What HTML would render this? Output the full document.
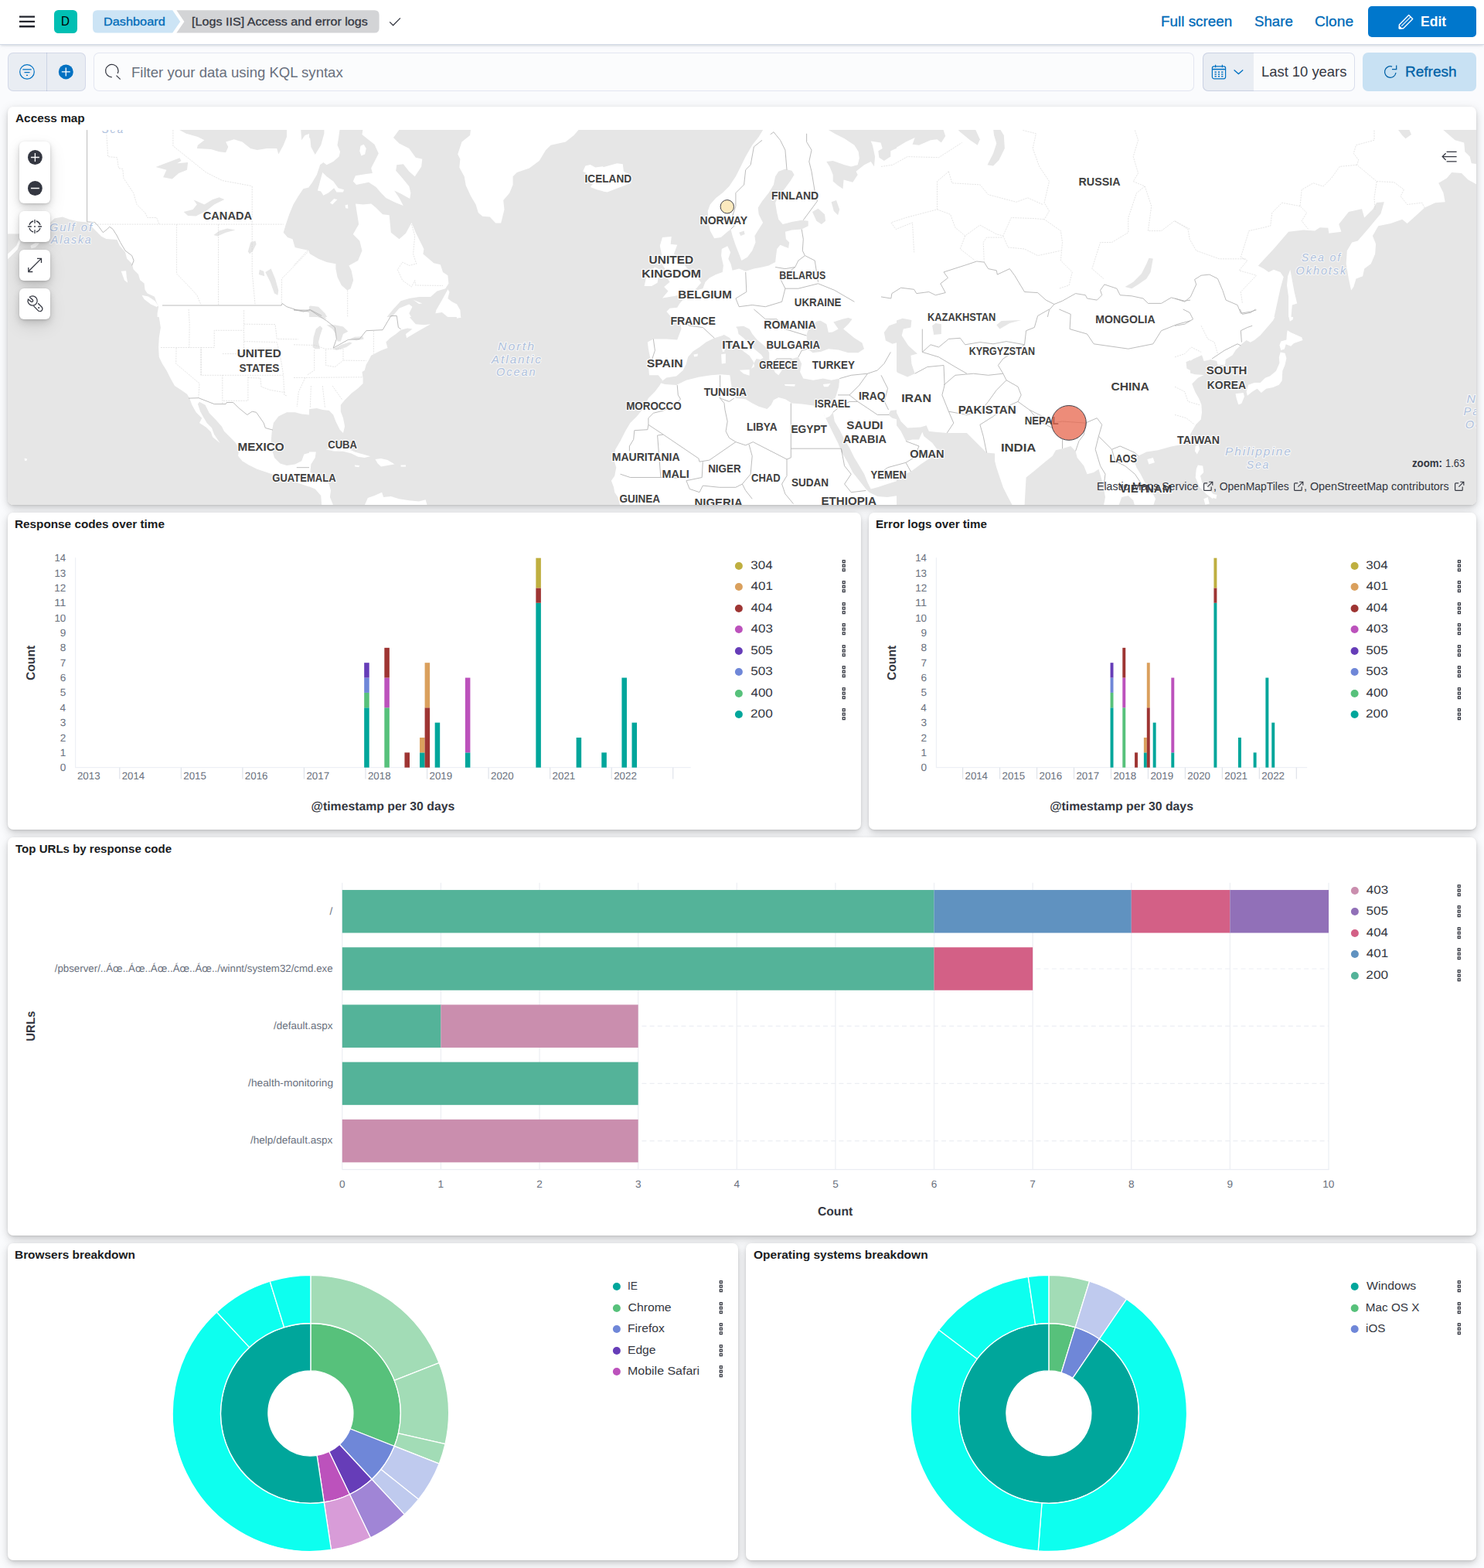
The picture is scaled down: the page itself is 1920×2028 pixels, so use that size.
<!DOCTYPE html>
<html lang="en"><head><meta charset="utf-8"><title>[Logs IIS] Access and error logs - Elastic</title>
<style>
html,body{margin:0;padding:0}
body{width:1920px;height:2028px;position:relative;overflow:hidden;background:#fafbfd;font-family:"Liberation Sans",sans-serif;color:#343741}
.a{position:absolute;display:block}
.t{position:absolute;white-space:nowrap;line-height:1;transform-origin:0 0}
.hdr{position:absolute;left:0;top:0;width:1920px;height:56.6px;background:#fff;border-bottom:1px solid #d3dae6;box-shadow:0 2.4px 2.4px -1px rgba(152,162,179,.3),0 1.2px 6px -2px rgba(152,162,179,.3)}
.p{position:absolute;background:#fff;border-radius:7px;box-shadow:0 1px 2px rgba(0,0,0,.08),0 2.5px 5px rgba(0,0,0,.06),0 5.5px 12px rgba(0,0,0,.06),0 3px 14px rgba(0,0,0,.115)}
svg text{font-family:"Liberation Sans",sans-serif}
</style></head>
<body>
<!-- head -->
<div class="hdr"></div>
<svg class="a" style="left:24px;top:18px" width="22" height="20" viewBox="0 0 22 20"><path d="M1 3.6h20M1 9.9h20M1 16.2h20" stroke="#22242c" stroke-width="2.4" fill="none"/></svg>
<div class="a" style="left:70px;top:13.4px;width:29.6px;height:29.4px;border-radius:5.5px;background:#00bfb3"></div>
<div class="t" style="left:79.15px;top:19px;line-height:17px;font-size:15.8px;color:#000;transform:scaleX(0.9617);">D</div>
<svg class="a" style="left:119px;top:12px" width="410" height="32" viewBox="119 12 410 32"><path d="M126 13.3H223.2L233.2 27.9L223.2 42.5H126Q120 42.5 120 36.5V19.3Q120 13.3 126 13.3Z" fill="#cce4f5"/><path d="M228.4 13.3H484.6Q490.6 13.3 490.6 19.3V36.5Q490.6 42.5 484.6 42.5H228.4L238.4 27.9Z" fill="#d3d4d6"/><path d="M504.2 28.4L508.6 32.8L517.9 23.4" stroke="#343741" stroke-width="1.25" fill="none"/></svg>
<div class="t" style="left:133.86px;top:19px;line-height:17px;font-size:15.2px;color:#006bb8;transform:scaleX(1.0730);-webkit-text-stroke:0.28px #006bb8;">Dashboard</div>
<div class="t" style="left:248.25px;top:19px;line-height:17px;font-size:15.2px;color:#343741;transform:scaleX(1.0626);-webkit-text-stroke:0.28px #343741;">[Logs IIS] Access and error logs</div>
<div class="t" style="left:1501.95px;top:18px;line-height:20px;font-size:17.75px;color:#006bb8;transform:scaleX(1.0629);-webkit-text-stroke:0.28px #006bb8;">Full screen</div>
<div class="t" style="left:1622.65px;top:18px;line-height:20px;font-size:17.75px;color:#006bb8;transform:scaleX(1.0508);-webkit-text-stroke:0.28px #006bb8;">Share</div>
<div class="t" style="left:1700.93px;top:18px;line-height:20px;font-size:17.75px;color:#006bb8;transform:scaleX(1.0808);-webkit-text-stroke:0.28px #006bb8;">Clone</div>
<div class="a" style="left:1770px;top:8.2px;width:140px;height:39.6px;border-radius:5px;background:#0077cc"></div>
<svg class="a" style="left:1809px;top:18px" width="20" height="20" viewBox="0 0 20 20" fill="none" stroke="#fff" stroke-width="1.4" stroke-linejoin="round" stroke-linecap="round"><path d="M13.7 1.5L18.7 6.6L6.5 18.7L1.2 18.8L1.4 13.9Z"/><path d="M4.6 15.4L15.6 4.4" stroke-width="1.15"/><path d="M1.3 18.7L1.4 15.4L4.6 18.6Z" fill="#fff" stroke-width="1"/></svg>
<div class="t" style="left:1838.13px;top:18px;line-height:20px;font-size:17.75px;color:#fff;font-weight:700;transform:scaleX(0.9869);">Edit</div>
<div class="a" style="left:10px;top:68px;width:101px;height:49.6px;border-radius:7px;background:#e9edf3;box-shadow:inset 0 0 0 1px rgba(17,43,134,.1)"></div>
<div class="a" style="left:60.2px;top:68px;width:1px;height:49.6px;background:rgba(17,43,134,.13)"></div>
<svg class="a" style="left:24px;top:82px" width="22" height="22" viewBox="0 0 22 22" fill="none" stroke="#0071c2" stroke-width="1.2"><circle cx="11" cy="10.9" r="9.3"/><path d="M5.3 7.9h11.4M7.5 11.6h7M10 15.4h2" stroke-width="1.3"/></svg>
<svg class="a" style="left:74px;top:82px" width="22" height="22" viewBox="0 0 22 22"><circle cx="11.3" cy="10.9" r="9.5" fill="#0071c2"/><path d="M11.3 5.4v11M5.8 10.9h11" stroke="#fff" stroke-width="1.3"/></svg>
<div class="a" style="left:121px;top:68px;width:1424.4px;height:49.6px;border-radius:7px;background:#fbfcfd;box-shadow:inset 0 0 0 1px rgba(17,43,134,.1)"></div>
<svg class="a" style="left:134px;top:81px" width="24" height="24" viewBox="0 0 24 24" fill="none" stroke="#343741" stroke-width="1.25"><path d="M10.8 18.8A8.2 8.2 0 1 1 18.23 14.07"/><path d="M16.5 16.6L21.7 21.6"/></svg>
<div class="t" style="left:170.08px;top:84px;line-height:20px;font-size:17.75px;color:#69707d;transform:scaleX(1.0456);">Filter your data using KQL syntax</div>
<div class="a" style="left:1556px;top:68px;width:197px;height:49.6px;border-radius:7px;background:#fbfcfd;overflow:hidden"><div style="position:absolute;left:0;top:0;width:66px;height:50px;background:#e9edf3"></div></div><div class="a" style="left:1556px;top:68px;width:197px;height:49.6px;border-radius:7px;box-shadow:inset 0 0 0 1px rgba(17,43,134,.14)"></div>
<svg class="a" style="left:1567px;top:82px" width="44" height="22" viewBox="0 0 44 22" fill="none" stroke="#0071c2" stroke-width="1.2"><rect x="1.4" y="3.8" width="17.2" height="16" rx="2.2"/><path d="M1.4 7.6h17.2" stroke-width="1.6"/><path d="M5.6 1.8v3.4M14.4 1.8v3.4"/><path d="M4.6 11.2h2.2M8.9 11.2h2.2M13.2 11.2h2.2M4.6 14h2.2M8.9 14h2.2M13.2 14h2.2M4.6 16.8h2.2M8.9 16.8h2.2M13.2 16.8h2.2" stroke-width="1.5"/><path d="M29.6 8.4L35.4 13.6L41.2 8.4" stroke-width="1.3"/></svg>
<div class="t" style="left:1632.09px;top:83px;line-height:20px;font-size:17.75px;color:#343741;transform:scaleX(1.0358);">Last 10 years</div>
<div class="a" style="left:1763px;top:68px;width:147px;height:49.6px;border-radius:7px;background:#c8e1f3"></div>
<svg class="a" style="left:1788px;top:82px" width="22" height="22" viewBox="0 0 22 22" fill="none" stroke="#0061a6" stroke-width="1.25"><path d="M13.04 4.1A7.25 7.25 0 1 0 17.98 12"/><path d="M13 7.6H18.7V2.4"/></svg>
<div class="t" style="left:1818.04px;top:83px;line-height:20px;font-size:17.75px;color:#0061a6;transform:scaleX(1.0715);-webkit-text-stroke:0.28px #0061a6;">Refresh</div>
<!-- panels -->
<div class="p" style="left:10px;top:138px;width:1900px;height:514.8px"></div>
<div class="t" style="left:19.92px;top:144px;line-height:17px;font-size:15.2px;color:#1a1c21;font-weight:700;transform:scaleX(1.0123);">Access map</div>
<div class="p" style="left:10px;top:662.8px;width:1104px;height:410.2px"></div>
<div class="t" style="left:19.28px;top:669px;line-height:17px;font-size:15.2px;color:#1a1c21;font-weight:700;transform:scaleX(1.0075);">Response codes over time</div>
<div class="p" style="left:1124px;top:662.8px;width:786px;height:410.2px"></div>
<div class="t" style="left:1133.29px;top:669px;line-height:17px;font-size:15.2px;color:#1a1c21;font-weight:700;transform:scaleX(0.9971);">Error logs over time</div>
<div class="p" style="left:10px;top:1083px;width:1900px;height:515px"></div>
<div class="t" style="left:20.13px;top:1089px;line-height:17px;font-size:15.2px;color:#1a1c21;font-weight:700;transform:scaleX(0.9910);">Top URLs by response code</div>
<div class="p" style="left:10px;top:1608px;width:945px;height:410px"></div>
<div class="t" style="left:19.27px;top:1614px;line-height:17px;font-size:15.2px;color:#1a1c21;font-weight:700;transform:scaleX(1.0146);">Browsers breakdown</div>
<div class="p" style="left:965px;top:1608px;width:945px;height:410px"></div>
<div class="t" style="left:974.66px;top:1614px;line-height:17px;font-size:15.2px;color:#1a1c21;font-weight:700;transform:scaleX(1.0202);">Operating systems breakdown</div>
<!-- map -->
<div class="a" style="left:10px;top:168px;width:1900px;height:484.8px;overflow:hidden;border-radius:0 0 7px 7px;background:#e6e6e6">
<svg class="a" style="left:0;top:0" width="1900" height="485" viewBox="10 168 1900 485">
<clipPath id="ca1"><rect x="10" y="168" width="390" height="242"/></clipPath>
<g clip-path="url(#ca1)">
<rect x="9.5" y="167.5" width="391" height="243" fill="#ffffff"/>
<path d="M10.0 302.4L23.5 302.4L42.6 298.6L65.0 287.9L70.4 282.6L81.0 280.5L89.6 283.7L100.2 286.2L113.0 287.5L119.4 294.1L131.1 305.8L137.5 309.0L151.4 310.1L154.6 317.6L162.0 326.1L164.2 334.6L170.6 341.0L172.7 348.5L179.1 354.9L181.2 362.3L186.6 366.6L187.6 375.1L190.8 379.4L200.0 383.7L202.6 391.3L205.1 396.7L203.6 405.2L203.6 411.6L10.0 411.6Z" fill="#e6e6e6" />
<path d="M10.0 328.4L21.3 317.8L24.9 309.3L26.7 312.5L22.4 323.1L10.0 335.3Z" fill="#ffffff" />
<path d="M39.4 317.8L45.8 313.9L51.2 314.6L45.8 319.9L40.5 321.6Z" fill="#ffffff" />
<path d="M156.7 350.8L163.1 350.2L163.8 358.3L165.2 365.8L161.0 362.6Z" fill="#ffffff" />
<path d="M183.4 381.7L191.9 383.5L200.4 389.2L204.7 395.6L202.6 397.1L195.1 393.5L186.6 387.1Z" fill="#ffffff" />
<path d="M229.2 166.4L240.9 172.8L255.9 177.1L264.4 181.3L255.9 187.7L254.8 192.0L272.9 193.0L283.6 196.2L292.1 197.3L295.3 189.9L292.1 183.5L302.8 180.3L313.4 183.5L324.1 192.0L332.6 194.1L345.4 192.0L358.2 192.0L360.3 199.4L366.7 187.7L371.0 177.1L371.0 166.4Z" fill="#e6e6e6" />
<path d="M389.1 166.4L390.2 181.3L394.5 174.9L400.9 172.8L400.9 166.4Z" fill="#e6e6e6" />
<path d="M201.5 215.9L232.4 204.3L234.5 208.0L229.2 211.2L243.1 210.1L242.0 219.7L231.3 224.0L222.8 231.4L211.1 229.3L215.4 219.7Z" fill="#e6e6e6" />
<path d="M237.7 274.1L249.5 270.9L254.8 264.5L250.5 258.5L264.4 264.5L275.1 258.1L283.6 255.3L290.4 258.1L277.2 264.5L266.5 273.0L253.7 279.4L243.1 279.0Z" fill="#e6e6e6" />
<path d="M276.5 303.9L283.6 298.6L294.2 295.4L304.5 297.5L292.1 300.7L281.4 305.4Z" fill="#e6e6e6" />
<path d="M320.9 325.2L324.1 313.5L330.5 311.4L331.6 315.7L327.3 324.2L323.0 328.4Z" fill="#e6e6e6" />
<path d="M335.8 348.7L341.2 350.8L342.2 357.2L334.8 355.1Z" fill="#e6e6e6" />
<path d="M343.3 351.9L350.7 347.6L356.1 360.4L360.3 375.4L359.3 381.7L355.0 379.6L349.7 364.7Z" fill="#e6e6e6" />
<path d="M400.9 242.1L392.3 244.2L385.9 253.8L379.5 264.5L374.2 277.3L369.9 290.1L366.7 300.7L372.1 307.1L378.5 309.3L381.7 319.9L390.2 322.0L400.9 324.2Z" fill="#e6e6e6" />
</g>
<clipPath id="ca2"><rect x="10" y="410" width="390" height="243"/></clipPath>
<g clip-path="url(#ca2)">
<rect x="9.5" y="409.5" width="391" height="244" fill="#e6e6e6"/>
<path d="M203.6 397.9L205.8 410.7L207.9 423.5L205.8 436.2L205.1 449.0L205.8 461.8L210.0 470.4L215.4 478.9L220.7 489.6L226.0 499.1L234.5 504.5L242.0 509.8L245.2 515.1L248.4 523.7L253.7 533.3L261.2 540.7L258.0 547.1L266.5 552.5L272.9 558.8L275.1 565.2L284.6 573.1L277.2 562.0L274.0 553.5L267.6 547.1L263.3 539.7L259.1 532.2L255.9 522.6L258.0 519.8L265.5 523.7L270.8 534.3L279.3 542.9L286.8 551.4L290.0 557.8L298.5 566.3L304.9 572.7L309.2 581.2L308.1 589.8L313.4 596.2L322.0 601.5L332.6 606.8L345.4 611.1L358.2 615.4L371.0 619.6L383.8 623.9L392.3 627.1L400.9 629.9L400.9 397.9Z" fill="#ffffff" />
<path d="M400.9 536.5L390.2 535.4L381.7 533.3L371.0 533.3L360.3 538.6L353.9 547.1L351.8 557.8L350.7 570.6L351.8 581.2L355.0 591.9L362.5 599.4L371.0 602.1L381.7 600.4L390.2 596.2L393.4 587.6L400.9 585.5Z" fill="#e6e6e6" />
<path d="M31.6 592.5L35.2 593.6L34.1 596.2L32.0 595.7Z" fill="#ffffff" />
</g>
<clipPath id="cb1"><rect x="400" y="168" width="380" height="242"/></clipPath>
<g clip-path="url(#cb1)">
<rect x="399.5" y="167.5" width="381" height="243" fill="#e6e6e6"/>
<path d="M358.7 166.4L389.0 166.4L389.0 181.3L396.0 172.8L401.3 179.2L402.4 189.9L407.7 200.1L415.2 187.7L419.4 172.8L419.4 166.4L439.7 166.4L437.6 181.3L436.5 187.7L440.1 196.2L438.6 202.6L431.2 209.0L422.6 213.3L418.4 210.1L414.1 213.3L409.9 226.1L403.5 236.8L400.3 241.0L390.7 243.2L388.1 247.4L388.1 254.9L358.7 258.1Z" fill="#ffffff" />
<path d="M417.3 222.9L422.6 228.2L431.2 234.6L437.6 243.2L445.0 245.3L444.0 248.5L435.4 248.5L432.2 243.2L424.8 249.6L418.4 252.8L415.2 247.4L410.9 246.4L414.1 234.6Z" fill="#ffffff" />
<path d="M426.9 262.3L432.2 257.0L436.5 258.1L430.1 264.5Z" fill="#ffffff" />
<path d="M446.5 265.5L449.9 264.5L450.4 269.8L447.2 269.2Z" fill="#ffffff" />
<path d="M466.4 188.8L470.6 186.7L473.8 192.0L472.1 199.4L467.4 201.6L465.3 195.2Z" fill="#ffffff" />
<path d="M469.6 166.4L468.5 173.9L474.9 179.2L484.5 186.7L489.8 198.4L484.5 209.0L480.2 217.6L481.9 224.0L473.8 225.0L460.0 227.2L456.8 234.6L461.0 238.9L477.0 235.7L486.6 242.1L493.0 249.6L499.4 255.9L512.2 262.3L521.8 266.0L516.5 255.9L510.1 246.4L518.6 250.6L530.3 257.0L531.4 249.6L529.3 241.0L520.7 230.4L512.2 220.8L513.3 213.3L521.8 212.2L529.3 221.8L536.7 228.2L545.2 215.4L546.3 205.8L537.8 203.7L529.3 192.0L516.5 185.6L509.0 178.1L517.5 166.4Z" fill="#ffffff" />
<path d="M358.7 321.0L386.4 319.9L397.1 323.1L401.3 328.4L412.0 334.8L422.6 339.1L434.4 341.2L434.4 347.6L436.5 358.3L441.8 369.0L449.3 375.4L453.6 373.2L457.2 362.6L454.6 349.8L451.4 343.4L463.2 337.0L468.5 324.2L465.3 311.4L456.8 302.9L464.2 290.1L462.1 277.3L460.0 263.4L469.6 264.5L480.2 263.4L486.6 268.7L495.1 277.3L503.7 278.3L505.8 300.7L516.5 309.3L525.0 301.8L532.5 287.9L537.8 300.7L544.2 313.5L548.4 322.0L547.4 328.4L554.8 334.8L561.2 340.2L569.8 342.3L573.0 351.9L579.4 356.2L580.4 366.8L576.2 373.2L565.5 376.4L557.0 383.9L542.0 383.9L529.3 386.0L518.6 389.2L507.9 400.9L498.3 412.7L358.7 412.7Z" fill="#ffffff" />
<path d="M579.4 374.3L571.9 388.1L564.4 400.9L563.4 405.2L571.9 404.1L582.6 412.7L596.4 412.7L595.4 400.9L591.1 393.5L584.7 390.3L579.4 386.0L581.5 377.5Z" fill="#ffffff" />
<path d="M534.6 387.7L546.3 392.4L542.0 393.0Z" fill="#ffffff" />
<path d="M504.7 412.7L516.5 398.8L529.3 393.5L533.5 396.7L529.3 405.2L533.5 412.7Z" fill="#ffffff" />
<path d="M386.4 412.7L392.8 400.9L401.3 395.6L412.0 396.7L420.5 405.2L424.8 412.7Z" fill="#e6e6e6" />
<path d="M609.2 166.4L608.1 174.9L597.5 183.5L592.2 199.4L595.4 205.8L594.3 216.5L600.7 228.2L602.8 240.0L609.2 253.8L615.6 264.5L618.8 275.1L624.1 279.8L633.7 280.5L641.2 288.6L648.2 288.6L652.5 270.9L651.2 259.1L659.3 249.6L663.6 238.9L663.6 228.2L668.9 222.9L684.9 217.6L697.7 208.0L706.2 194.1L712.6 187.7L731.8 183.5L742.5 174.9L749.9 166.4Z" fill="#ffffff" />
<path d="M754.2 221.8L757.4 214.4L763.8 212.9L770.2 216.5L780.9 215.0L780.9 247.4L772.3 245.3L763.8 242.1L767.0 237.8L758.5 224.0Z" fill="#ffffff" />
</g>
<clipPath id="cb2"><rect x="400" y="410" width="380" height="243"/></clipPath>
<g clip-path="url(#cb2)">
<rect x="399.5" y="409.5" width="381" height="244" fill="#e6e6e6"/>
<path d="M377.9 397.9L497.3 397.9L498.3 408.5L507.9 404.3L514.3 397.9L529.3 397.9L530.3 410.7L537.8 419.2L548.4 420.3L557.0 419.2L542.0 427.7L529.3 435.2L526.1 437.3L525.0 432.0L533.5 425.6L527.1 424.5L518.6 426.7L512.2 432.0L504.7 437.3L499.4 442.6L501.5 450.1L493.0 453.3L486.6 456.5L480.2 459.7L477.0 466.1L473.8 471.4L471.7 478.9L468.5 481.0L469.6 489.6L469.6 495.9L463.2 502.3L454.6 508.7L446.1 517.3L440.8 523.7L440.8 532.2L444.0 540.7L446.1 551.4L444.0 559.9L439.7 555.7L434.4 545.0L431.2 536.5L425.8 531.1L417.3 530.1L409.9 527.9L401.3 529.0L394.9 530.1L394.9 535.4L386.4 534.3L380.0 532.2L377.9 532.2Z" fill="#ffffff" />
<path d="M563.4 397.9L565.5 403.2L580.4 408.5L590.0 406.4L591.1 411.7L596.4 410.7L597.5 397.9Z" fill="#ffffff" />
<path d="M377.9 413.9L386.4 406.4L392.8 403.2L401.3 398.9L414.1 401.1L422.6 412.8L416.2 411.7L405.6 408.5L397.1 410.7L390.7 413.9Z" fill="#e6e6e6" />
<path d="M404.5 449.0L405.6 436.2L408.8 425.6L414.1 421.3L417.3 424.5L414.1 434.1L412.0 442.6L414.1 451.2L407.7 451.2Z" fill="#e6e6e6" />
<path d="M422.6 420.3L433.3 420.3L444.0 422.4L450.4 428.8L444.0 432.0L440.8 441.6L436.5 441.6L434.4 432.0L430.1 425.6Z" fill="#e6e6e6" />
<path d="M431.2 451.2L441.8 445.8L452.5 442.6L455.7 443.7L448.2 449.0L435.4 452.9Z" fill="#e6e6e6" />
<path d="M452.5 438.4L458.9 435.8L469.6 435.2L470.6 438.4L461.0 440.5Z" fill="#e6e6e6" />
<path d="M421.6 581.2L435.4 578.0L450.4 580.2L458.9 584.4L469.6 587.6L479.1 590.2L471.7 591.9L463.2 590.8L454.6 586.6L444.0 583.8L431.2 583.4Z" fill="#ffffff" />
<path d="M485.5 594.0L493.0 593.0L501.5 595.1L510.5 600.4L501.5 602.1L493.0 603.6L488.7 599.4Z" fill="#ffffff" />
<path d="M458.9 601.5L465.3 602.1L464.2 604.3L459.3 603.6Z" fill="#ffffff" />
<path d="M518.6 601.5L525.0 601.5L525.0 603.6L518.6 603.6Z" fill="#ffffff" />
<path d="M377.9 587.6L390.7 586.6L399.2 584.4L408.8 584.4L407.7 591.9L402.4 600.4L401.3 611.1L414.1 615.4L425.8 626.0L428.0 634.5L426.9 643.1L431.2 653.7L416.2 653.7L415.2 640.9L407.7 632.4L397.1 628.1L380.0 621.7L377.9 621.7Z" fill="#ffffff" />
<path d="M471.7 653.7L475.9 644.1L484.5 640.9L494.1 636.7L496.2 643.1L505.8 642.0L516.5 645.2L529.3 647.3L542.0 648.4L550.6 646.3L552.7 653.7Z" fill="#ffffff" />
</g>
<clipPath id="cc1"><rect x="780" y="168" width="380" height="242"/></clipPath>
<g clip-path="url(#cc1)">
<rect x="779.5" y="167.5" width="381" height="243" fill="#e6e6e6"/>
<path d="M757.9 213.3L768.5 215.4L781.3 215.9L798.4 211.2L805.8 212.2L806.9 221.8L815.4 226.1L816.5 236.8L802.6 242.1L785.6 248.5L772.8 246.4L757.9 242.1Z" fill="#ffffff" />
<path d="M988.1 166.4L981.7 177.1L973.2 187.7L964.7 202.6L958.3 215.4L951.9 228.2L943.4 241.0L934.8 249.6L926.3 255.9L918.8 264.5L915.7 273.0L916.7 287.9L918.8 298.6L924.2 308.2L932.7 307.1L941.2 299.7L945.5 296.5L947.6 305.0L951.9 317.8L956.2 328.4L959.4 337.0L966.8 332.7L973.2 324.2L977.5 313.5L976.4 305.0L981.7 296.5L987.1 287.9L981.7 277.3L980.7 268.7L986.0 260.2L994.5 249.6L1000.9 238.9L1003.1 228.2L1007.3 221.8L1015.9 218.6L1024.4 220.8L1027.6 226.1L1022.3 234.6L1015.9 243.2L1007.3 253.8L1003.1 262.3L1005.2 275.1L1007.3 283.7L1012.7 290.1L1024.4 286.9L1037.2 284.7L1045.7 285.8L1045.7 292.2L1037.2 296.5L1024.4 297.5L1015.9 299.7L1016.9 309.3L1021.2 313.5L1020.1 321.0L1009.5 316.7L1005.2 322.0L1004.1 330.6L1003.1 339.1L994.5 343.4L986.0 345.5L975.4 347.6L964.7 350.8L956.2 347.6L947.6 349.8L945.5 341.2L942.3 334.8L945.1 326.3L941.2 318.2L933.8 322.0L933.1 330.6L935.9 343.4L934.8 351.9L926.3 355.1L917.8 359.4L912.5 364.7L909.3 373.2L900.7 375.4L892.2 377.5L879.4 392.4L876.2 397.7L866.6 398.8L862.3 403.1L870.9 412.7L1161.9 412.7L1161.9 166.4Z" fill="#ffffff" />
<path d="M857.0 307.1L868.7 306.1L867.7 315.7L876.2 316.7L871.9 328.4L881.5 337.0L887.9 345.5L894.3 354.0L902.9 359.4L907.1 365.8L900.7 373.2L896.5 377.5L879.4 381.7L857.0 385.6L864.5 376.4L859.1 371.1L866.6 364.7L861.3 357.2L860.2 347.6L854.9 339.1L855.9 328.4L853.8 317.8Z" fill="#ffffff" />
<path d="M833.6 370.0L835.7 360.4L840.0 351.9L847.4 345.5L853.8 348.7L851.7 358.3L850.6 365.8L843.2 370.0Z" fill="#ffffff" />
<path d="M1069.2 166.4L1079.8 172.8L1092.6 179.2L1105.4 187.7L1110.7 196.2L1111.8 204.8L1109.7 213.3L1101.2 215.4L1092.6 213.3L1077.7 208.0L1069.2 209.0L1073.4 215.4L1077.7 226.1L1077.7 234.6L1084.1 240.0L1090.5 244.2L1091.6 232.5L1103.3 235.7L1109.7 226.1L1107.5 221.8L1118.2 213.3L1126.7 209.0L1131.0 215.4L1132.1 202.6L1128.9 187.7L1126.7 182.4L1139.5 184.5L1141.7 192.0L1136.3 195.2L1137.4 203.7L1143.8 208.0L1152.3 202.6L1152.3 195.2L1161.9 190.9L1161.9 166.4Z" fill="#e6e6e6" />
<path d="M1051.0 274.1L1058.5 269.8L1067.0 277.3L1068.1 285.8L1062.8 290.1L1056.4 285.8Z" fill="#e6e6e6" />
<path d="M1075.6 261.3L1082.0 259.1L1086.2 270.9L1084.1 278.3L1078.8 273.0Z" fill="#e6e6e6" />
<path d="M956.2 300.7L962.6 298.6L963.6 302.9L958.3 305.0Z" fill="#e6e6e6" />
</g>
<clipPath id="cc2"><rect x="780" y="410" width="380" height="243"/></clipPath>
<g clip-path="url(#cc2)">
<rect x="779.5" y="409.5" width="381" height="244" fill="#ffffff"/>
<path d="M757.9 397.9L862.3 397.9L866.6 404.3L879.4 412.8L881.5 425.6L876.2 439.4L862.3 438.4L845.3 438.4L837.8 442.6L838.9 451.2L841.0 461.8L838.9 472.5L840.0 485.3L851.7 485.3L857.0 491.7L853.8 498.1L847.4 506.6L838.9 515.1L832.5 527.9L824.0 538.6L815.4 547.1L809.0 557.8L802.6 570.6L796.2 581.2L794.1 594.0L797.3 604.7L795.2 615.4L790.9 621.7L794.1 630.3L795.2 636.7L799.4 643.1L802.6 654.8L757.9 654.8Z" fill="#e6e6e6" />
<path d="M853.8 494.9L862.3 488.5L875.1 486.4L883.7 478.9L887.9 470.4L890.1 461.8L896.5 454.4L905.0 449.0L913.5 442.6L924.2 437.3L934.8 434.1L953.0 422.4L961.9 421.7L969.6 425.6L973.4 432.0L979.8 439.7L987.5 446.1L992.6 451.2L995.2 456.3L995.2 464.0L998.8 473.6L1003.1 482.1L1007.3 485.3L1011.6 478.9L1015.9 470.4L1024.4 464.0L1032.9 461.8L1037.2 470.4L1035.1 481.0L1039.3 489.6L1052.1 491.7L1064.9 489.6L1075.6 491.7L1086.2 489.6L1085.2 500.2L1082.0 510.9L1078.8 519.4L1075.6 525.8L1073.4 525.8L1064.9 522.6L1054.2 524.7L1037.2 522.6L1024.4 521.5L1015.9 516.2L1007.3 514.1L1000.9 517.3L997.7 523.7L992.4 529.0L981.7 525.8L973.2 521.5L964.7 516.2L951.9 515.1L947.6 506.6L945.5 493.8L944.4 485.3L932.7 484.2L919.9 485.3L905.0 487.4L887.9 491.7L875.1 498.1L860.2 497.0Z" fill="#e6e6e6" />
<path d="M935.1 432.0L944.0 437.1L951.7 447.3L959.4 452.5L969.6 460.1L974.7 467.8L976.0 474.2L972.2 476.8L974.3 471.4L978.6 464.0L983.9 465.0L987.5 462.7L984.9 458.8L977.3 452.5L961.9 437.1L955.5 432.0L954.2 425.6L951.9 422.4L934.8 429.9Z" fill="#ffffff" />
<path d="M956.8 478.7L969.6 478.0L969.6 485.7L961.9 483.2Z" fill="#ffffff" />
<path d="M933.1 458.2L938.9 457.6L938.9 469.7L933.8 470.4Z" fill="#ffffff" />
<path d="M934.4 448.0L937.4 447.3L937.4 454.4L934.8 455.0Z" fill="#ffffff" />
<path d="M1014.8 497.0L1028.7 497.0L1028.2 499.8L1015.9 499.1Z" fill="#ffffff" />
<path d="M1064.9 497.0L1074.5 495.9L1071.3 500.2L1066.0 500.2Z" fill="#ffffff" />
<path d="M897.5 458.6L902.9 457.6L902.4 460.8L898.2 461.4Z" fill="#ffffff" />
<path d="M1043.8 432.0L1045.1 428.1L1056.6 415.4L1061.7 414.7L1069.4 419.2L1071.9 430.1L1077.1 429.4L1084.7 425.6L1078.3 416.6L1089.9 412.8L1097.5 410.9L1102.6 412.8L1097.5 419.2L1091.1 425.6L1105.2 437.1L1115.4 443.5L1118.0 451.2L1110.3 456.3L1097.5 456.3L1084.7 452.5L1071.9 451.2L1061.7 455.0L1051.5 456.3L1045.1 451.2L1043.8 438.4Z" fill="#e6e6e6" />
<path d="M1064.9 532.2L1068.1 540.7L1073.4 538.6L1077.7 533.3L1079.8 545.0L1086.2 555.7L1092.6 568.4L1099.0 579.1L1105.4 591.9L1111.8 602.6L1118.2 613.2L1122.5 623.9L1126.7 632.4L1135.3 630.3L1148.1 626.0L1161.9 621.7L1161.9 640.9L1148.1 643.1L1135.3 642.0L1124.6 636.7L1120.3 632.4L1111.8 621.7L1103.3 611.1L1096.9 598.3L1089.4 585.5L1084.1 572.7L1077.7 559.9L1071.3 547.1L1067.0 538.6Z" fill="#e6e6e6" />
<path d="M1161.9 417.1L1150.2 421.3L1143.8 429.9L1145.9 440.5L1154.5 444.8L1161.9 442.6Z" fill="#e6e6e6" />
<path d="M1161.9 530.1L1152.3 531.1L1149.1 536.5L1154.5 540.7L1161.9 542.9Z" fill="#e6e6e6" />
</g>
<clipPath id="cd1"><rect x="1160" y="168" width="380" height="242"/></clipPath>
<g clip-path="url(#cd1)">
<rect x="1159.5" y="167.5" width="381" height="243" fill="#ffffff"/>
<path d="M1137.9 166.4L1220.0 166.4L1223.2 176.0L1217.8 184.5L1212.5 180.3L1204.0 181.3L1189.0 187.7L1180.5 186.7L1183.7 178.1L1172.0 183.5L1152.8 195.2L1150.7 205.8L1137.9 208.6Z" fill="#e6e6e6" />
<path d="M1238.1 166.4L1261.5 166.4L1267.9 180.3L1264.7 187.7L1255.1 181.3L1242.3 170.7Z" fill="#e6e6e6" />
<path d="M1285.0 166.4L1293.5 166.4L1298.8 174.9L1299.9 192.0L1292.5 206.9L1285.0 214.4L1277.5 213.3L1285.0 198.4L1289.3 185.6L1286.1 174.9Z" fill="#e6e6e6" />
<path d="M1455.6 371.1L1466.2 364.7L1476.9 354.0L1483.3 341.2L1486.5 333.8L1491.8 334.4L1488.6 351.9L1483.3 360.4L1472.6 367.9L1464.1 373.2Z" fill="#e6e6e6" />
</g>
<clipPath id="cd2"><rect x="1160" y="410" width="380" height="243"/></clipPath>
<g clip-path="url(#cd2)">
<rect x="1159.5" y="409.5" width="381" height="244" fill="#ffffff"/>
<path d="M1144.3 427.7L1152.8 417.1L1167.7 411.7L1179.4 413.9L1178.4 423.5L1168.8 425.6L1166.7 434.1L1175.2 446.9L1186.9 457.6L1178.4 459.7L1179.4 470.4L1183.7 483.2L1174.1 487.4L1161.3 482.1L1154.9 472.5L1158.1 464.0L1154.9 449.0L1148.5 440.5Z" fill="#e6e6e6" />
<path d="M1206.1 421.3L1210.4 418.1L1217.8 419.2L1217.8 432.0L1208.2 433.0Z" fill="#e6e6e6" />
<path d="M1289.3 420.3L1295.7 414.9L1321.2 413.9L1306.3 418.1L1293.5 425.6Z" fill="#e6e6e6" />
<path d="M1149.6 530.1L1159.2 532.2L1165.6 545.0L1174.1 553.5L1191.2 552.5L1198.6 550.3L1201.8 557.8L1210.4 558.8L1225.3 559.9L1250.9 559.9L1259.4 568.4L1267.9 577.0L1276.5 585.5L1287.1 586.6L1287.1 596.2L1289.3 604.7L1293.5 617.5L1297.8 630.3L1304.2 643.1L1310.6 654.8L1137.9 654.8L1137.9 632.4L1152.8 621.7L1165.6 615.4L1178.4 610.0L1191.2 600.4L1204.0 591.9L1212.5 581.2L1206.1 572.7L1195.4 564.2L1193.3 558.8L1189.0 568.4L1180.5 568.4L1172.0 570.6L1165.6 557.8L1159.2 549.3L1152.8 540.7Z" fill="#e6e6e6" />
<path d="M1325.5 654.8L1326.6 634.5L1327.6 617.5L1338.3 609.0L1351.1 598.3L1361.7 589.8L1366.0 582.3L1374.5 580.2L1385.2 577.0L1391.6 583.4L1393.7 591.9L1402.3 602.6L1406.5 613.2L1415.1 611.1L1421.4 606.8L1424.6 617.5L1427.8 630.3L1430.0 643.1L1427.8 654.8Z" fill="#e6e6e6" />
<path d="M1541.9 571.6L1530.2 574.8L1515.3 577.4L1498.2 582.3L1483.3 584.4L1472.6 589.8L1467.3 596.2L1470.5 604.7L1475.8 613.2L1481.2 623.9L1489.7 634.5L1495.0 645.2L1491.8 654.8L1541.9 654.8Z" fill="#e6e6e6" />
<path d="M1484.3 594.0L1491.8 591.9L1493.9 598.3L1486.5 600.4Z" fill="#ffffff" />
<path d="M1447.0 654.8L1451.3 643.1L1459.8 640.9L1466.2 647.3L1468.4 654.8Z" fill="#e6e6e6" />
<path d="M1534.5 468.2L1541.9 465.0L1541.9 480.0L1535.5 476.8Z" fill="#e6e6e6" />
</g>
<clipPath id="ce1"><rect x="1540" y="168" width="370" height="242"/></clipPath>
<g clip-path="url(#ce1)">
<rect x="1539.5" y="167.5" width="371" height="243" fill="#ffffff"/>
<path d="M1627.7 343.8L1647.9 322.0L1667.1 299.7L1686.3 297.5L1701.2 298.6L1707.6 294.3L1718.3 294.8L1719.4 301.8L1735.4 299.7L1732.2 290.1L1744.9 274.1L1762.0 270.2L1765.2 281.5L1775.9 270.9L1781.2 261.9L1790.8 261.3L1786.5 276.2L1771.6 294.3L1756.7 311.4L1749.2 313.5L1742.8 324.2L1741.7 341.2L1744.9 360.4L1748.1 375.4L1751.3 371.1L1754.5 360.4L1763.1 357.2L1765.2 347.6L1773.7 341.2L1779.1 328.4L1780.1 315.7L1775.9 305.0L1783.3 292.2L1799.3 289.0L1814.2 283.7L1820.6 289.0L1831.3 279.4L1843.0 268.7L1856.9 262.3L1869.7 261.3L1867.5 249.6L1861.2 236.8L1871.8 230.4L1878.2 222.9L1891.0 224.0L1899.5 232.5L1911.3 238.9L1911.3 412.7L1647.9 412.7L1656.5 373.2L1660.7 358.3L1656.5 351.9L1647.9 348.7L1641.5 351.9L1635.1 347.6Z" fill="#e6e6e6" />
<path d="M1666.1 357.2L1669.3 348.7L1671.8 362.6L1674.6 377.5L1678.2 392.4L1671.8 394.5L1670.3 412.7L1667.1 412.7L1667.1 383.9L1665.0 369.0Z" fill="#ffffff" />
<path d="M1807.8 166.4L1822.8 166.4L1826.0 173.9L1818.5 179.2L1814.2 174.9Z" fill="#e6e6e6" />
<path d="M1865.4 166.4L1882.5 181.3L1894.2 184.5L1895.3 196.2L1901.7 202.6L1903.8 211.2L1911.3 212.2L1911.3 166.4Z" fill="#e6e6e6" />
</g>
<clipPath id="ce2"><rect x="1540" y="410" width="370" height="243"/></clipPath>
<g clip-path="url(#ce2)">
<rect x="1539.5" y="409.5" width="371" height="244" fill="#e6e6e6"/>
<path d="M1530.0 400.0L1656.0 400.0L1655.4 392.8L1652.2 404.3L1647.1 414.5L1639.4 423.5L1630.5 433.7L1622.8 440.1L1617.7 442.7L1612.6 440.1L1606.2 445.2L1598.5 452.9L1594.7 459.3L1585.7 465.1L1585.1 472.1L1575.5 472.1L1574.2 467.0L1566.5 465.1L1557.6 467.0L1555.0 459.3L1543.5 464.4L1532.0 472.1L1533.3 477.2L1539.7 482.3L1546.1 484.3L1557.6 484.9L1549.9 488.7L1542.2 496.4L1546.1 506.6L1551.2 515.6L1554.4 523.3L1555.0 533.5L1553.7 542.5L1547.3 548.9L1542.2 557.8L1539.7 562.0L1535.0 570.0L1530.0 578.0Z" fill="#ffffff" />
<path d="M1665.7 427.3L1670.1 429.9L1684.2 436.3L1685.5 440.1L1674.0 444.0L1670.1 447.8L1663.7 445.2L1661.8 451.6L1657.3 452.9L1655.4 446.5L1657.3 441.4L1664.4 439.5L1665.0 431.2Z" fill="#ffffff" />
<path d="M1656.7 455.5L1662.5 456.8L1664.4 463.2L1662.5 472.1L1659.3 479.8L1658.6 492.6L1654.8 497.7L1647.1 500.9L1638.2 502.8L1631.8 507.9L1626.6 502.8L1620.3 506.6L1613.9 511.8L1612.6 506.6L1615.1 497.7L1622.8 495.1L1630.5 495.1L1636.9 488.7L1643.3 486.2L1651.0 479.8L1655.4 469.6L1654.8 461.9Z" fill="#ffffff" />
<path d="M1598.5 509.2L1608.7 507.9L1610.0 513.0L1606.2 522.0L1602.3 523.3L1599.8 515.6Z" fill="#ffffff" />
<path d="M1667.6 400.0L1674.0 400.0L1672.7 413.3L1668.9 415.8L1667.0 408.0Z" fill="#ffffff" />
<path d="M1546.7 577.0L1550.9 574.8L1552.0 581.2L1548.8 587.6L1546.0 583.4Z" fill="#ffffff" />
<path d="M1549.9 601.5L1556.2 602.6L1557.3 611.1L1553.0 615.4L1555.2 623.9L1562.6 630.3L1571.2 640.9L1569.0 645.2L1560.5 638.8L1552.0 630.3L1546.7 617.5L1547.7 606.8Z" fill="#ffffff" />
<path d="M1557.3 645.2L1562.6 643.1L1564.8 651.6L1559.4 652.7Z" fill="#ffffff" />
<path d="M1569.0 638.8L1574.4 639.9L1573.3 645.2L1570.1 644.1Z" fill="#ffffff" />
</g>
<g><path d="M112.6 168.1L112.6 286.9L122.6 287.5L127.9 293.3L133.3 300.7L138.6 296.5L141.8 293.3L146.1 296.5L151.4 305.0L155.7 313.5L162.0 324.2L170.6 330.6L173.1 337.0L170.6 343.4" fill="none" stroke="#b4b4b4" stroke-width="0.9" />
<path d="M210.0 395.0L364.2 395.0L365.0 392.4L371.0 396.7L383.8 400.9L400.0 403.1" fill="none" stroke="#b4b4b4" stroke-width="0.9" />
<path d="M122.6 290.1L366.7 290.1" fill="none" stroke="#d2d2d2" stroke-width="0.6" stroke-dasharray="2 1.2"/>
<path d="M228.6 290.1L228.6 354.0L243.1 369.0L254.8 381.7L260.1 394.5" fill="none" stroke="#d2d2d2" stroke-width="0.6" stroke-dasharray="2 1.2"/>
<path d="M282.5 290.1L282.5 394.5" fill="none" stroke="#d2d2d2" stroke-width="0.6" stroke-dasharray="2 1.2"/>
<path d="M326.2 241.0L326.2 290.1L326.2 351.9L330.1 394.5" fill="none" stroke="#d2d2d2" stroke-width="0.6" stroke-dasharray="2 1.2"/>
<path d="M137.5 168.1L139.7 202.6L151.4 203.7L153.5 217.6L158.8 218.6L159.9 230.4L172.7 249.6L177.0 264.5L187.6 275.1L190.8 281.5L202.6 281.5L205.8 289.6" fill="none" stroke="#d2d2d2" stroke-width="0.6" stroke-dasharray="2 1.2"/>
<path d="M223.9 168.1L223.9 188.8L266.5 222.9L287.8 233.6L326.2 240.6" fill="none" stroke="#d2d2d2" stroke-width="0.6" stroke-dasharray="2 1.2"/>
<path d="M400.0 324.2L364.6 360.4L364.2 394.5" fill="none" stroke="#d2d2d2" stroke-width="0.6" stroke-dasharray="2 1.2"/>
<path d="M244.1 515.1L256.9 514.7L277.2 522.6L292.1 522.6L293.2 520.5L301.7 520.5L309.2 527.9L319.8 536.5L326.2 532.2L331.6 533.3L341.2 547.1L343.3 553.5L352.9 556.1" fill="none" stroke="#b4b4b4" stroke-width="0.9" />
<path d="M383.8 604.7L400.0 604.7" fill="none" stroke="#b4b4b4" stroke-width="0.9" />
<path d="M207.9 449.5L260.1 449.5L260.1 485.3L287.8 485.3L287.8 522.6" fill="none" stroke="#d2d2d2" stroke-width="0.6" stroke-dasharray="2 1.2"/>
<path d="M244.1 400.0L245.2 419.2L244.8 449.5" fill="none" stroke="#d2d2d2" stroke-width="0.6" stroke-dasharray="2 1.2"/>
<path d="M228.1 450.1L227.7 470.4L258.0 495.9L256.9 514.1" fill="none" stroke="#d2d2d2" stroke-width="0.6" stroke-dasharray="2 1.2"/>
<path d="M260.1 485.3L260.1 449.5L277.2 449.5L277.2 427.3L315.6 427.3L315.6 400.0" fill="none" stroke="#d2d2d2" stroke-width="0.6" stroke-dasharray="2 1.2"/>
<path d="M287.8 485.3L366.7 485.3L367.8 510.9L371.0 511.9" fill="none" stroke="#d2d2d2" stroke-width="0.6" stroke-dasharray="2 1.2"/>
<path d="M287.8 457.6L315.6 457.6L315.6 427.3" fill="none" stroke="#d2d2d2" stroke-width="0.6" stroke-dasharray="2 1.2"/>
<path d="M315.6 441.6L358.2 442.6L362.5 459.7L366.7 485.3" fill="none" stroke="#d2d2d2" stroke-width="0.6" stroke-dasharray="2 1.2"/>
<path d="M315.6 419.2L356.1 419.6L358.2 438.4L385.9 438.8" fill="none" stroke="#d2d2d2" stroke-width="0.6" stroke-dasharray="2 1.2"/>
<path d="M320.9 487.4L320.9 518.3L288.9 518.3" fill="none" stroke="#d2d2d2" stroke-width="0.6" stroke-dasharray="2 1.2"/>
<path d="M320.9 488.5L336.9 489.1L338.0 500.2L349.7 504.5L368.9 507.7" fill="none" stroke="#d2d2d2" stroke-width="0.6" stroke-dasharray="2 1.2"/>
<path d="M398.1 323.8L380.0 343.4" fill="none" stroke="#d2d2d2" stroke-width="0.6" stroke-dasharray="2 1.2"/>
<path d="M449.7 375.4L449.7 409.9" fill="none" stroke="#d2d2d2" stroke-width="0.6" stroke-dasharray="2 1.2"/>
<path d="M532.5 290.1L536.7 305.0L534.6 328.4L538.8 341.2L529.3 343.4L520.7 339.1L514.3 348.7L520.7 362.6L532.5 371.1L536.7 362.6L537.8 369.0L573.0 369.4" fill="none" stroke="#d2d2d2" stroke-width="0.6" stroke-dasharray="2 1.2"/>
<path d="M380.0 400.5L392.8 403.1L401.3 400.5L416.2 408.4" fill="none" stroke="#b4b4b4" stroke-width="0.9" />
<path d="M380.0 401.1L401.3 401.1L422.6 414.9L433.3 423.5L435.4 438.4L431.2 450.1L450.4 439.4L465.3 438.4L473.8 427.7L495.1 426.7L505.8 408.5L513.3 408.5L515.4 423.5L518.6 425.6" fill="none" stroke="#b4b4b4" stroke-width="0.9" />
<path d="M380.0 445.8L407.7 446.5L420.5 451.2L444.0 451.2L444.0 466.1L473.8 466.5" fill="none" stroke="#d2d2d2" stroke-width="0.6" stroke-dasharray="2 1.2"/>
<path d="M380.0 488.5L469.6 487.8" fill="none" stroke="#d2d2d2" stroke-width="0.6" stroke-dasharray="2 1.2"/>
<path d="M394.9 488.5L386.4 506.6L384.3 525.8" fill="none" stroke="#d2d2d2" stroke-width="0.6" stroke-dasharray="2 1.2"/>
<path d="M402.4 499.1L401.3 527.9" fill="none" stroke="#d2d2d2" stroke-width="0.6" stroke-dasharray="2 1.2"/>
<path d="M417.3 499.1L420.5 527.9" fill="none" stroke="#d2d2d2" stroke-width="0.6" stroke-dasharray="2 1.2"/>
<path d="M430.1 499.1L442.9 517.3" fill="none" stroke="#d2d2d2" stroke-width="0.6" stroke-dasharray="2 1.2"/>
<path d="M406.7 452.2L406.7 478.9L397.1 485.3" fill="none" stroke="#d2d2d2" stroke-width="0.6" stroke-dasharray="2 1.2"/>
<path d="M421.6 452.2L421.6 472.5L433.3 474.6L444.0 466.1" fill="none" stroke="#d2d2d2" stroke-width="0.6" stroke-dasharray="2 1.2"/>
<path d="M483.4 427.7L483.4 457.6" fill="none" stroke="#d2d2d2" stroke-width="0.6" stroke-dasharray="2 1.2"/>
<path d="M986.0 181.3L975.4 189.9L971.1 213.3L964.7 219.7L962.6 238.9L951.9 249.6L951.9 266.6L947.6 279.4L949.8 292.2L945.5 296.5" fill="none" stroke="#b4b4b4" stroke-width="0.9" />
<path d="M996.7 173.9L1000.9 170.7L1009.5 181.3L1015.9 194.1L1018.0 219.7" fill="none" stroke="#b4b4b4" stroke-width="0.9" />
<path d="M1043.6 172.8L1043.6 183.5L1050.0 194.1L1046.8 209.0L1050.0 221.8L1054.2 247.4L1057.4 260.2L1039.3 284.7" fill="none" stroke="#b4b4b4" stroke-width="0.9" />
<path d="M1037.2 296.5L1039.3 309.3L1038.3 324.2L1041.4 330.6L1032.9 337.0L1028.7 345.5L1015.9 347.6L1003.1 345.5" fill="none" stroke="#b4b4b4" stroke-width="0.9" />
<path d="M964.7 351.9L965.8 377.5L951.9 386.0L956.2 396.7L973.2 394.5L990.3 396.7L1011.6 390.3L1015.9 373.2L1032.9 373.2L1058.5 366.8L1079.8 375.4L1105.4 390.3" fill="none" stroke="#b4b4b4" stroke-width="0.9" />
<path d="M1041.4 330.6L1054.2 337.0L1058.5 364.7" fill="none" stroke="#b4b4b4" stroke-width="0.9" />
<path d="M1015.9 373.2L1009.5 360.4L1028.7 345.5" fill="none" stroke="#b4b4b4" stroke-width="0.9" />
<path d="M876.2 498.1L877.3 510.9L880.5 516.2L873.0 523.7L858.1 531.1L845.3 534.3L838.9 540.7L838.9 549.3L858.1 562.0L903.9 593.0L905.0 597.2L917.8 595.1L951.9 571.6L964.7 575.9L974.3 571.6L1018.0 594.0L1023.3 591.9L1023.3 521.5" fill="none" stroke="#b4b4b4" stroke-width="0.9" />
<path d="M838.9 549.3L837.8 555.7L820.8 556.7L819.7 568.4L814.4 577.0L814.4 583.4" fill="none" stroke="#b4b4b4" stroke-width="0.9" />
<path d="M858.1 562.0L850.6 563.1L854.9 617.5L815.4 617.5L802.6 613.2" fill="none" stroke="#b4b4b4" stroke-width="0.9" />
<path d="M931.6 485.3L931.6 515.1L937.0 521.5L938.0 530.1L941.2 545.0L939.1 557.8L943.4 566.3L951.9 571.6" fill="none" stroke="#b4b4b4" stroke-width="0.9" />
<path d="M931.6 515.1L943.4 519.4L949.8 515.1" fill="none" stroke="#b4b4b4" stroke-width="0.9" />
<path d="M1023.3 580.2L1088.4 580.2" fill="none" stroke="#b4b4b4" stroke-width="0.9" />
<path d="M969.0 574.8L973.2 589.8L971.1 613.2L960.4 626.0L964.7 634.5L973.2 645.2" fill="none" stroke="#b4b4b4" stroke-width="0.9" />
<path d="M1018.0 594.0L1018.0 615.4L1011.6 626.0L1015.9 638.8L1026.5 651.6" fill="none" stroke="#b4b4b4" stroke-width="0.9" />
<path d="M909.3 597.2L908.2 617.5L887.9 621.7L892.2 632.4L905.0 636.7L909.3 628.1L930.6 630.3L951.9 630.3L960.4 626.0" fill="none" stroke="#b4b4b4" stroke-width="0.9" />
<path d="M854.9 617.5L887.9 618.6" fill="none" stroke="#b4b4b4" stroke-width="0.9" />
<path d="M1088.4 580.2L1089.4 585.5" fill="none" stroke="#b4b4b4" stroke-width="0.9" />
<path d="M1086.2 489.6L1101.2 485.3L1122.5 483.2L1135.3 478.9L1143.8 470.4L1152.3 455.4" fill="none" stroke="#b4b4b4" stroke-width="0.9" />
<path d="M1084.1 510.9L1099.0 510.9L1111.8 498.1L1122.5 483.2" fill="none" stroke="#b4b4b4" stroke-width="0.9" />
<path d="M1099.0 510.9L1109.7 519.4L1122.5 527.9L1135.3 536.5L1150.2 536.5" fill="none" stroke="#b4b4b4" stroke-width="0.9" />
<path d="M1077.7 533.3L1084.1 527.9L1099.0 519.4L1109.7 519.4" fill="none" stroke="#b4b4b4" stroke-width="0.9" />
<path d="M879.4 412.8L892.2 421.3L909.3 423.5L924.2 437.3" fill="none" stroke="#b4b4b4" stroke-width="0.9" />
<path d="M845.3 438.4L847.4 453.3L841.0 472.5" fill="none" stroke="#b4b4b4" stroke-width="0.9" />
<path d="M975.4 400.0L990.3 412.8L1005.2 412.8L1015.9 425.6L1043.6 434.1" fill="none" stroke="#b4b4b4" stroke-width="0.9" />
<path d="M994.5 472.5L1005.2 464.0L1024.4 464.0" fill="none" stroke="#b4b4b4" stroke-width="0.9" />
<path d="M1032.9 461.8L1037.2 453.3L1045.7 451.2" fill="none" stroke="#b4b4b4" stroke-width="0.9" />
<path d="M1088.4 580.2L1092.6 602.6L1101.2 613.2L1092.6 626.0L1101.2 636.7L1120.3 634.5" fill="none" stroke="#b4b4b4" stroke-width="0.9" />
<path d="M1140.0 383.9L1152.8 386.0L1153.9 379.6L1165.6 372.2L1182.6 374.3L1185.8 379.6L1201.8 377.5L1210.4 381.7L1223.2 378.6L1216.8 366.8L1226.4 359.4L1221.0 351.9L1250.9 342.3L1263.7 338.0L1273.3 339.1L1278.6 347.6L1289.3 349.8L1290.3 355.1L1306.3 347.6L1312.7 356.2L1325.5 377.5L1342.6 378.6L1353.2 388.1L1363.9 393.5" fill="none" stroke="#b4b4b4" stroke-width="0.9" />
<path d="M1363.9 393.5L1374.5 389.2L1391.6 379.6L1404.4 381.7L1406.5 386.0L1419.3 388.1L1425.7 381.7L1423.6 375.4L1428.9 367.9L1444.9 373.2L1449.2 381.7L1464.1 382.8L1479.0 386.0L1485.4 392.4L1502.5 392.4L1515.3 384.9L1532.3 389.2L1540.0 388.1" fill="none" stroke="#b4b4b4" stroke-width="0.9" />
<path d="M1363.9 393.5L1357.5 400.9L1355.4 409.9" fill="none" stroke="#b4b4b4" stroke-width="0.9" />
<path d="M1323.4 168.5L1340.4 172.8L1336.2 192.0L1344.7 215.4L1357.5 234.6L1351.1 262.3L1357.5 273.0L1351.1 283.7L1372.4 298.6L1374.5 313.5L1372.4 337.0L1387.3 351.9L1383.1 369.0L1370.3 373.2" fill="none" stroke="#d2d2d2" stroke-width="0.6" stroke-dasharray="2 1.2"/>
<path d="M1468.4 168.5L1472.6 181.3L1466.2 202.6L1472.6 224.0L1466.2 234.6L1481.2 241.0L1489.7 266.6L1485.4 298.6L1502.5 298.6L1519.5 285.8L1540.0 296.5" fill="none" stroke="#d2d2d2" stroke-width="0.6" stroke-dasharray="2 1.2"/>
<path d="M1481.2 241.0L1470.5 249.6L1459.8 281.5L1459.8 300.7L1438.5 313.5L1423.6 313.5L1412.9 347.6L1427.8 360.4" fill="none" stroke="#d2d2d2" stroke-width="0.6" stroke-dasharray="2 1.2"/>
<path d="M1140.0 215.4L1154.9 213.3L1174.1 202.6L1214.6 203.7L1244.5 184.5" fill="none" stroke="#d2d2d2" stroke-width="0.6" stroke-dasharray="2 1.2"/>
<path d="M1227.4 221.8L1212.5 234.6L1212.5 270.9L1172.0 281.5L1152.8 287.9L1159.2 296.5L1180.5 287.9L1182.6 326.3" fill="none" stroke="#d2d2d2" stroke-width="0.6" stroke-dasharray="2 1.2"/>
<path d="M1227.4 221.8L1231.7 236.8L1267.9 238.9L1278.6 251.7L1314.8 261.3L1329.8 255.9L1349.0 264.5" fill="none" stroke="#d2d2d2" stroke-width="0.6" stroke-dasharray="2 1.2"/>
<path d="M1212.5 270.9L1229.6 277.3L1235.9 294.3L1248.7 305.0L1267.9 291.1L1289.3 302.9L1297.8 305.0L1308.4 281.5L1338.3 282.6L1351.1 283.7" fill="none" stroke="#d2d2d2" stroke-width="0.6" stroke-dasharray="2 1.2"/>
<path d="M1297.8 305.0L1304.2 319.9L1325.5 322.0L1342.6 330.6L1372.4 324.2" fill="none" stroke="#d2d2d2" stroke-width="0.6" stroke-dasharray="2 1.2"/>
<path d="M1248.7 305.0L1242.3 322.0L1261.5 337.0" fill="none" stroke="#d2d2d2" stroke-width="0.6" stroke-dasharray="2 1.2"/>
<path d="M1273.3 339.1L1272.2 313.5L1276.5 307.1L1297.8 307.1" fill="none" stroke="#d2d2d2" stroke-width="0.6" stroke-dasharray="2 1.2"/>
<path d="M1193.3 425.6L1193.3 455.4L1204.0 445.8L1214.6 449.0L1227.4 438.4L1242.3 437.3L1248.7 445.8L1267.9 442.6L1285.0 444.8L1302.0 441.6L1325.5 445.8L1327.6 427.7L1338.3 423.5L1342.6 408.5L1357.5 400.0" fill="none" stroke="#b4b4b4" stroke-width="0.9" />
<path d="M1370.3 400.0L1385.2 406.4L1384.1 425.6L1406.5 432.0L1415.1 444.8L1459.8 451.2L1491.8 444.8L1502.5 427.7L1523.8 419.2L1540.0 414.9" fill="none" stroke="#b4b4b4" stroke-width="0.9" />
<path d="M1325.5 445.8L1297.8 464.0L1291.4 472.5L1297.8 483.2L1302.0 491.7L1317.0 500.2L1321.2 510.9L1317.0 519.4L1331.9 530.1L1349.0 538.6L1361.7 547.1L1374.5 545.0L1404.4 547.1L1419.3 540.7L1425.7 549.3L1421.4 564.2L1438.5 581.2L1449.2 577.0L1468.4 585.5L1472.6 589.8" fill="none" stroke="#b4b4b4" stroke-width="0.9" />
<path d="M1221.0 472.5L1222.1 498.1L1218.9 510.9L1227.4 532.2L1233.8 547.1L1225.3 559.9" fill="none" stroke="#b4b4b4" stroke-width="0.9" />
<path d="M1221.0 498.1L1235.9 485.3L1259.4 483.2L1278.6 485.3L1297.8 483.2" fill="none" stroke="#b4b4b4" stroke-width="0.9" />
<path d="M1227.4 532.2L1250.9 536.5L1267.9 532.2L1278.6 519.4L1289.3 504.5L1302.0 491.7" fill="none" stroke="#b4b4b4" stroke-width="0.9" />
<path d="M1276.5 585.5L1272.2 564.2L1267.9 549.3L1285.0 538.6L1297.8 527.9L1317.0 519.4" fill="none" stroke="#b4b4b4" stroke-width="0.9" />
<path d="M1331.9 530.1L1344.7 545.0L1361.7 553.5L1361.7 547.1" fill="none" stroke="#b4b4b4" stroke-width="0.9" />
<path d="M1374.5 568.4L1374.5 580.2" fill="none" stroke="#b4b4b4" stroke-width="0.9" />
<path d="M1404.4 547.1L1402.3 562.0L1395.9 570.6L1391.6 583.4" fill="none" stroke="#b4b4b4" stroke-width="0.9" />
<path d="M1421.4 564.2L1417.2 581.2L1423.6 602.6L1430.0 613.2L1427.8 630.3" fill="none" stroke="#b4b4b4" stroke-width="0.9" />
<path d="M1438.5 581.2L1442.8 596.2L1455.6 602.6L1468.4 613.2L1476.9 626.0" fill="none" stroke="#b4b4b4" stroke-width="0.9" />
<path d="M1172.0 570.6L1189.0 577.0L1182.6 591.9L1172.0 598.3L1148.5 604.7L1140.0 611.1" fill="none" stroke="#b4b4b4" stroke-width="0.9" />
<path d="M1172.0 598.3L1178.4 610.0" fill="none" stroke="#b4b4b4" stroke-width="0.9" />
<path d="M1140.0 485.3L1148.5 502.3L1144.3 519.4L1149.6 530.1" fill="none" stroke="#b4b4b4" stroke-width="0.9" />
<path d="M1183.7 483.2L1199.7 474.6L1221.0 472.5" fill="none" stroke="#b4b4b4" stroke-width="0.9" />
<path d="M1193.3 455.4L1214.6 461.8L1235.9 474.6L1250.9 483.2" fill="none" stroke="#b4b4b4" stroke-width="0.9" />
<path d="M1520.0 386.0L1532.8 390.3L1540.3 383.9L1547.7 367.9L1545.6 361.5L1554.1 356.2L1564.8 355.1L1575.4 360.4L1581.8 375.4L1586.1 388.1L1601.0 394.5L1605.3 405.2L1618.1 403.1L1625.5 400.9" fill="none" stroke="#b4b4b4" stroke-width="0.9" />
<path d="M1778.0 168.5L1778.0 181.3L1754.5 187.7L1751.3 198.4L1757.7 206.9L1755.6 213.3L1781.2 234.6L1778.0 255.9L1779.1 270.9" fill="none" stroke="#d2d2d2" stroke-width="0.6" stroke-dasharray="2 1.2"/>
<path d="M1755.6 213.3L1733.2 215.4L1722.6 230.4L1711.9 241.0L1699.1 236.8L1684.2 245.3L1682.0 266.6L1690.6 275.1L1684.2 285.8L1692.7 296.5" fill="none" stroke="#d2d2d2" stroke-width="0.6" stroke-dasharray="2 1.2"/>
<path d="M1682.0 266.6L1658.6 262.3L1645.8 275.1L1643.7 292.2L1615.9 298.6L1605.3 332.7L1613.8 337.0L1603.2 349.8L1625.5 356.2L1605.3 377.5L1607.4 392.4" fill="none" stroke="#d2d2d2" stroke-width="0.6" stroke-dasharray="2 1.2"/>
<path d="M1781.2 234.6L1803.6 235.7L1816.4 245.3L1812.1 253.8L1820.6 264.5L1839.8 262.3L1843.0 268.7" fill="none" stroke="#d2d2d2" stroke-width="0.6" stroke-dasharray="2 1.2"/>
<path d="M1520.0 285.8L1537.1 296.5L1539.2 309.3L1547.7 324.2L1577.6 334.8L1611.7 334.8" fill="none" stroke="#d2d2d2" stroke-width="0.6" stroke-dasharray="2 1.2"/>
<path d="M1604.2 400.0L1607.4 406.4L1618.1 404.3L1624.5 400.0" fill="none" stroke="#b4b4b4" stroke-width="0.9" />
<path d="M1568.0 464.0L1584.0 453.3L1601.0 444.8L1605.3 446.9" fill="none" stroke="#b4b4b4" stroke-width="0.9" />
<path d="M1620.2 421.3L1613.8 423.5L1605.3 427.7L1606.4 442.6" fill="none" stroke="#b4b4b4" stroke-width="0.9" />
<path d="M1520.0 421.3L1532.8 419.2L1543.5 412.8L1539.2 404.3L1530.7 400.0" fill="none" stroke="#b4b4b4" stroke-width="0.9" />
<path d="M1554.1 421.3L1562.6 438.4L1571.2 442.6L1575.4 457.6" fill="none" stroke="#d2d2d2" stroke-width="0.6" stroke-dasharray="2 1.2"/>
<path d="M1520.0 461.8L1532.8 457.6L1541.3 449.0L1554.1 455.4" fill="none" stroke="#d2d2d2" stroke-width="0.6" stroke-dasharray="2 1.2"/>
<path d="M1520.0 500.2L1532.8 506.6L1537.1 519.4L1552.0 523.7" fill="none" stroke="#d2d2d2" stroke-width="0.6" stroke-dasharray="2 1.2"/>
<path d="M1520.0 536.5L1534.9 540.7L1545.6 549.3" fill="none" stroke="#d2d2d2" stroke-width="0.6" stroke-dasharray="2 1.2"/></g>
<g font-weight="700" stroke="#fff" stroke-width="2.6" stroke-linejoin="round" paint-order="stroke" stroke-opacity=".85">
<text transform="translate(262.75 284.00) scale(0.9736 1)" font-size="15.0" fill="#404040" font-weight="700" >CANADA</text>
<text transform="translate(306.78 462.30) scale(1.0202 1)" font-size="15.0" fill="#404040" font-weight="700" >UNITED</text>
<text transform="translate(309.40 480.50) scale(0.9154 1)" font-size="15.0" fill="#404040" font-weight="700" >STATES</text>
<text transform="translate(307.48 582.80) scale(1.0184 1)" font-size="15.0" fill="#404040" font-weight="700" >MEXICO</text>
<text transform="translate(352.31 623.10) scale(0.8698 1)" font-size="15.0" fill="#404040" font-weight="700" >GUATEMALA</text>
<text transform="translate(424.21 580.00) scale(0.8719 1)" font-size="15.0" fill="#404040" font-weight="700" >CUBA</text>
<text transform="translate(756.59 236.20) scale(0.9072 1)" font-size="15.0" fill="#404040" font-weight="700" >ICELAND</text>
<text transform="translate(905.61 289.90) scale(0.9333 1)" font-size="15.0" fill="#404040" font-weight="700" >NORWAY</text>
<text transform="translate(997.92 258.40) scale(0.9300 1)" font-size="15.0" fill="#404040" font-weight="700" >FINLAND</text>
<text transform="translate(839.62 340.50) scale(1.0294 1)" font-size="15.0" fill="#404040" font-weight="700" >UNITED</text>
<text transform="translate(830.34 358.80) scale(1.0583 1)" font-size="15.0" fill="#404040" font-weight="700" >KINGDOM</text>
<text transform="translate(877.29 386.30) scale(1.0066 1)" font-size="15.0" fill="#404040" font-weight="700" >BELGIUM</text>
<text transform="translate(1008.27 361.40) scale(0.8263 1)" font-size="15.0" fill="#404040" font-weight="700" >BELARUS</text>
<text transform="translate(1027.85 396.10) scale(0.8871 1)" font-size="15.0" fill="#404040" font-weight="700" >UKRAINE</text>
<text transform="translate(867.41 420.10) scale(0.9374 1)" font-size="15.0" fill="#404040" font-weight="700" >FRANCE</text>
<text transform="translate(988.31 425.00) scale(0.9408 1)" font-size="15.0" fill="#404040" font-weight="700" >ROMANIA</text>
<text transform="translate(934.16 450.60) scale(1.0405 1)" font-size="15.0" fill="#404040" font-weight="700" >ITALY</text>
<text transform="translate(991.52 450.60) scale(0.8770 1)" font-size="15.0" fill="#404040" font-weight="700" >BULGARIA</text>
<text transform="translate(836.75 474.90) scale(1.0488 1)" font-size="15.0" fill="#404040" font-weight="700" >SPAIN</text>
<text transform="translate(982.32 477.10) scale(0.7820 1)" font-size="15.0" fill="#404040" font-weight="700" >GREECE</text>
<text transform="translate(1050.85 477.10) scale(0.8945 1)" font-size="15.0" fill="#404040" font-weight="700" >TURKEY</text>
<text transform="translate(910.64 512.00) scale(0.9253 1)" font-size="15.0" fill="#404040" font-weight="700" >TUNISIA</text>
<text transform="translate(810.20 529.50) scale(0.8933 1)" font-size="15.0" fill="#404040" font-weight="700" >MOROCCO</text>
<text transform="translate(1054.06 527.40) scale(0.8367 1)" font-size="15.0" fill="#404040" font-weight="700" >ISRAEL</text>
<text transform="translate(1110.88 517.10) scale(0.9201 1)" font-size="15.0" fill="#404040" font-weight="700" >IRAQ</text>
<text transform="translate(965.89 557.00) scale(0.9094 1)" font-size="15.0" fill="#404040" font-weight="700" >LIBYA</text>
<text transform="translate(1023.48 560.20) scale(0.9138 1)" font-size="15.0" fill="#404040" font-weight="700" >EGYPT</text>
<text transform="translate(1095.36 555.10) scale(1.0125 1)" font-size="15.0" fill="#404040" font-weight="700" >SAUDI</text>
<text transform="translate(1090.74 573.20) scale(0.9624 1)" font-size="15.0" fill="#404040" font-weight="700" >ARABIA</text>
<text transform="translate(791.66 596.00) scale(0.9386 1)" font-size="15.0" fill="#404040" font-weight="700" >MAURITANIA</text>
<text transform="translate(916.21 611.00) scale(0.8919 1)" font-size="15.0" fill="#404040" font-weight="700" >NIGER</text>
<text transform="translate(856.49 618.40) scale(0.9610 1)" font-size="15.0" fill="#404040" font-weight="700" >MALI</text>
<text transform="translate(972.02 622.70) scale(0.8673 1)" font-size="15.0" fill="#404040" font-weight="700" >CHAD</text>
<text transform="translate(1023.96 628.70) scale(0.9038 1)" font-size="15.0" fill="#404040" font-weight="700" >SUDAN</text>
<text transform="translate(1126.53 618.80) scale(0.8699 1)" font-size="15.0" fill="#404040" font-weight="700" >YEMEN</text>
<text transform="translate(801.44 650.40) scale(0.9036 1)" font-size="15.0" fill="#404040" font-weight="700" >GUINEA</text>
<text transform="translate(898.60 655.10) scale(0.9950 1)" font-size="15.0" fill="#404040" font-weight="700" >NIGERIA</text>
<text transform="translate(1062.44 652.50) scale(1.0095 1)" font-size="15.0" fill="#404040" font-weight="700" >ETHIOPIA</text>
<text transform="translate(1395.49 240.30) scale(0.9534 1)" font-size="15.0" fill="#404040" font-weight="700" >RUSSIA</text>
<text transform="translate(1199.94 415.20) scale(0.8591 1)" font-size="15.0" fill="#404040" font-weight="700" >KAZAKHSTAN</text>
<text transform="translate(1417.31 418.40) scale(0.9384 1)" font-size="15.0" fill="#404040" font-weight="700" >MONGOLIA</text>
<text transform="translate(1253.66 458.90) scale(0.8362 1)" font-size="15.0" fill="#404040" font-weight="700" >KYRGYZSTAN</text>
<text transform="translate(1437.46 504.80) scale(1.0411 1)" font-size="15.0" fill="#404040" font-weight="700" >CHINA</text>
<text transform="translate(1166.19 519.90) scale(1.0591 1)" font-size="15.0" fill="#404040" font-weight="700" >IRAN</text>
<text transform="translate(1239.64 534.80) scale(1.0092 1)" font-size="15.0" fill="#404040" font-weight="700" >PAKISTAN</text>
<text transform="translate(1325.71 549.10) scale(0.8827 1)" font-size="15.0" fill="#404040" font-weight="700" >NEPAL</text>
<text transform="translate(1294.93 583.90) scale(1.1133 1)" font-size="15.0" fill="#404040" font-weight="700" >INDIA</text>
<text transform="translate(1177.15 591.80) scale(0.9705 1)" font-size="15.0" fill="#404040" font-weight="700" >OMAN</text>
<text transform="translate(1435.50 597.70) scale(0.8508 1)" font-size="15.0" fill="#404040" font-weight="700" >LAOS</text>
<text transform="translate(1448.45 636.50) scale(1.0046 1)" font-size="15.0" fill="#404040" font-weight="700" >VIETNAM</text>
<text transform="translate(1523.09 574.30) scale(0.9478 1)" font-size="15.0" fill="#404040" font-weight="700" >TAIWAN</text>
<text transform="translate(1560.67 484.10) scale(1.0028 1)" font-size="15.0" fill="#404040" font-weight="700" >SOUTH</text>
<text transform="translate(1561.77 502.60) scale(0.9285 1)" font-size="15.0" fill="#404040" font-weight="700" >KOREA</text>
</g>
<g font-style="italic" stroke="#fff" stroke-width="2.2" stroke-linejoin="round" paint-order="stroke" stroke-opacity=".7">
<text transform="translate(644.01 453.00) scale(1.0857 1)" font-size="14.6" fill="#afc1dd" letter-spacing="1.900" >North</text>
<text transform="translate(635.85 469.60) scale(1.0464 1)" font-size="14.6" fill="#afc1dd" letter-spacing="1.900" >Atlantic</text>
<text transform="translate(642.11 486.20) scale(0.9967 1)" font-size="14.6" fill="#afc1dd" letter-spacing="1.900" >Ocean</text>
<text transform="translate(1585.03 589.00) scale(1.0551 1)" font-size="14.6" fill="#afc1dd" letter-spacing="1.900" >Philippine</text>
<text transform="translate(1612.75 605.60) scale(0.9596 1)" font-size="14.6" fill="#afc1dd" letter-spacing="1.900" >Sea</text>
<text transform="translate(1683.80 338.10) scale(0.9741 1)" font-size="14.6" fill="#afc1dd" letter-spacing="1.900" >Sea of</text>
<text transform="translate(1676.61 354.80) scale(0.9942 1)" font-size="14.6" fill="#afc1dd" letter-spacing="1.900" >Okhotsk</text>
<text transform="translate(63.67 298.90) scale(1.0191 1)" font-size="14.6" fill="#afc1dd" letter-spacing="1.900" >Gulf of</text>
<text transform="translate(65.80 314.70) scale(0.9749 1)" font-size="14.6" fill="#afc1dd" letter-spacing="1.900" >Alaska</text>
<text transform="translate(131.82 172.40) scale(0.9215 1)" font-size="14.6" fill="#afc1dd" letter-spacing="1.900" >Sea</text>
<text transform="translate(1897.61 521.20) scale(1.0857 1)" font-size="14.6" fill="#afc1dd" letter-spacing="1.900" >North</text>
<text transform="translate(1893.55 537.20) scale(1.0039 1)" font-size="14.6" fill="#afc1dd" letter-spacing="1.900" >Pacific</text>
<text transform="translate(1895.71 553.80) scale(0.9967 1)" font-size="14.6" fill="#afc1dd" letter-spacing="1.900" >Ocean</text>
</g>
<circle cx="940.8" cy="267.3" r="8.7" fill="#fae2a8" fill-opacity=".75" stroke="#41414a" stroke-width="1"/>
<circle cx="1382.9" cy="546.9" r="22.4" fill="#e7664c" fill-opacity=".75" stroke="#41414a" stroke-width="1"/>
</svg>
<div class="a" style="left:15px;top:15px;width:40px;height:80px;border-radius:6px;background:#fff;box-shadow:0 1px 3px rgba(0,0,0,.14),0 4px 10px rgba(0,0,0,.12),0 9px 22px rgba(0,0,0,.1)"></div>
<div class="a" style="left:15px;top:105px;width:40px;height:40px;border-radius:6px;background:#fff;box-shadow:0 1px 3px rgba(0,0,0,.14),0 4px 10px rgba(0,0,0,.12),0 9px 22px rgba(0,0,0,.1)"></div>
<div class="a" style="left:15px;top:155px;width:40px;height:40px;border-radius:6px;background:#fff;box-shadow:0 1px 3px rgba(0,0,0,.14),0 4px 10px rgba(0,0,0,.12),0 9px 22px rgba(0,0,0,.1)"></div>
<div class="a" style="left:15px;top:205px;width:40px;height:40px;border-radius:6px;background:#fff;box-shadow:0 1px 3px rgba(0,0,0,.14),0 4px 10px rgba(0,0,0,.12),0 9px 22px rgba(0,0,0,.1)"></div>
<svg class="a" style="left:15px;top:15px" width="40" height="230" viewBox="25 183 40 230"><circle cx="45.4" cy="203.5" r="9.4" fill="#343741"/><path d="M45.4 198v11M39.9 203.5h11" stroke="#fff" stroke-width="1.3"/><circle cx="45.4" cy="243.5" r="9.4" fill="#343741"/><path d="M39.9 243.5h11" stroke="#fff" stroke-width="1.3"/><g fill="none" stroke="#343741" stroke-width="1.3"><path d="M46.9 286A7.2 7.2 0 0 1 52 291.1M52 294.9A7.2 7.2 0 0 1 46.9 300M43.1 300A7.2 7.2 0 0 1 38 294.9M38 291.1A7.2 7.2 0 0 1 43.1 286"/><path d="M45 283.9v4.9M45 297.2v4.9M35.9 293h4.9M49.2 293h4.9"/><circle cx="45" cy="293" r="0.9" fill="#343741" stroke="none"/><path d="M37.1 350.7L53.2 334.6M48 334.4H53.5V339.9M36.8 346V351.5H42.3"/><path d="M36.4 386.9L40 390A1.5 1.5 0 0 0 42.2 387.8L38.3 384.3A6.1 6.1 0 1 1 36.4 386.9ZM49.2 392.3L54.2 397.3A3.2 3.2 0 0 1 49 401.4L43.4 395.6" stroke-linejoin="round"/><circle cx="50.2" cy="398.1" r="1" fill="#343741" stroke="none"/></g></svg>
<svg class="a" style="left:1852px;top:24px" width="26" height="22" viewBox="1862 192 26 22" fill="none" stroke="#343741" stroke-width="1.25"><path d="M1871.6 196.4H1884.6M1866.6 202.6H1884.6M1871.6 208.8H1884.6M1870.6 198.2L1866.2 202.6L1870.6 207"/></svg>
<div class="t" style="left:1817.07px;top:422px;line-height:17px;font-size:15.2px;color:#343741;font-weight:700;transform:scaleX(0.8717);">zoom:</div>
<div class="t" style="left:1860.22px;top:422px;line-height:17px;font-size:15.2px;color:#343741;transform:scaleX(0.8502);">1.63</div>
<div class="t" style="left:1408.84px;top:452px;line-height:17px;font-size:15.2px;color:#343741;transform:scaleX(0.9321);">Elastic Maps Service</div>
<svg class="a" style="left:1546.4px;top:453.6px" width="14" height="14" viewBox="0 0 14 14" fill="none" stroke="#343741" stroke-width="1.15"><path d="M11.2 7.6V11.4Q11.2 12.4 10.2 12.4H2.6Q1.6 12.4 1.6 11.4V3.8Q1.6 2.8 2.6 2.8H6.2"/><path d="M8.2 1.2H12.8V5.8M12.6 1.4L6.4 7.6"/></svg>
<div class="t" style="left:1559.75px;top:452px;line-height:17px;font-size:15.2px;color:#343741;transform:scaleX(0.9150);">, OpenMapTiles</div>
<svg class="a" style="left:1663.2px;top:453.6px" width="14" height="14" viewBox="0 0 14 14" fill="none" stroke="#343741" stroke-width="1.15"><path d="M11.2 7.6V11.4Q11.2 12.4 10.2 12.4H2.6Q1.6 12.4 1.6 11.4V3.8Q1.6 2.8 2.6 2.8H6.2"/><path d="M8.2 1.2H12.8V5.8M12.6 1.4L6.4 7.6"/></svg>
<div class="t" style="left:1677.11px;top:452px;line-height:17px;font-size:15.2px;color:#343741;transform:scaleX(0.9424);">, OpenStreetMap contributors</div>
<svg class="a" style="left:1871.0px;top:453.6px" width="14" height="14" viewBox="0 0 14 14" fill="none" stroke="#343741" stroke-width="1.15"><path d="M11.2 7.6V11.4Q11.2 12.4 10.2 12.4H2.6Q1.6 12.4 1.6 11.4V3.8Q1.6 2.8 2.6 2.8H6.2"/><path d="M8.2 1.2H12.8V5.8M12.6 1.4L6.4 7.6"/></svg>
</div>
<!-- chart1 -->
<svg class="a" style="left:10px;top:690px" width="1104" height="380" viewBox="10 690 1104 380" text-rendering="geometricPrecision">
<path d="M97.60 721.20V992.70H893.70" stroke="#edf0f5" stroke-width="1.2" fill="none"/>
<text transform="translate(77.67 997.25) scale(1.0150 1)" font-size="13.4" fill="#69707d" >0</text>
<text transform="translate(77.80 977.89) scale(1.0150 1)" font-size="13.4" fill="#69707d" >1</text>
<text transform="translate(77.82 958.54) scale(1.0150 1)" font-size="13.4" fill="#69707d" >2</text>
<text transform="translate(77.73 939.18) scale(1.0150 1)" font-size="13.4" fill="#69707d" >3</text>
<text transform="translate(77.53 919.82) scale(1.0150 1)" font-size="13.4" fill="#69707d" >4</text>
<text transform="translate(77.71 900.46) scale(1.0150 1)" font-size="13.4" fill="#69707d" >5</text>
<text transform="translate(77.73 881.11) scale(1.0150 1)" font-size="13.4" fill="#69707d" >6</text>
<text transform="translate(77.82 861.75) scale(1.0150 1)" font-size="13.4" fill="#69707d" >7</text>
<text transform="translate(77.73 842.39) scale(1.0150 1)" font-size="13.4" fill="#69707d" >8</text>
<text transform="translate(77.78 823.04) scale(1.0150 1)" font-size="13.4" fill="#69707d" >9</text>
<text transform="translate(70.38 803.68) scale(0.9954 1)" font-size="13.4" fill="#69707d" >10</text>
<text transform="translate(70.29 784.32) scale(1.0870 1)" font-size="13.4" fill="#69707d" >11</text>
<text transform="translate(70.37 764.96) scale(1.0068 1)" font-size="13.4" fill="#69707d" >12</text>
<text x="70.38" y="745.61" font-size="13.4" fill="#69707d" >13</text>
<text transform="translate(70.39 726.25) scale(0.9858 1)" font-size="13.4" fill="#69707d" >14</text>
<text transform="translate(157.73 1008.20) scale(0.9880 1)" font-size="13.4" fill="#69707d" >2014</text>
<text transform="translate(237.28 1008.20) scale(0.9939 1)" font-size="13.4" fill="#69707d" >2015</text>
<text transform="translate(316.83 1008.20) scale(0.9948 1)" font-size="13.4" fill="#69707d" >2016</text>
<text transform="translate(396.38 1008.20) scale(0.9978 1)" font-size="13.4" fill="#69707d" >2017</text>
<text transform="translate(475.93 1008.20) scale(0.9946 1)" font-size="13.4" fill="#69707d" >2018</text>
<text transform="translate(555.48 1008.20) scale(0.9964 1)" font-size="13.4" fill="#69707d" >2019</text>
<text transform="translate(635.03 1008.20) scale(0.9925 1)" font-size="13.4" fill="#69707d" >2020</text>
<text transform="translate(714.58 1008.20) scale(0.9971 1)" font-size="13.4" fill="#69707d" >2021</text>
<text transform="translate(794.13 1008.20) scale(0.9978 1)" font-size="13.4" fill="#69707d" >2022</text>
<path d="M154.80 992.70v14.8 M234.35 992.70v14.8 M313.90 992.70v14.8 M393.45 992.70v14.8 M473.00 992.70v14.8 M552.55 992.70v14.8 M632.10 992.70v14.8 M711.65 992.70v14.8 M791.20 992.70v14.8 M870.75 992.70v14.8" stroke="#dfe3ea" stroke-width="1.2" fill="none"/>
<text transform="translate(99.93 1008.20) scale(0.9948 1)" font-size="13.4" fill="#69707d" >2013</text>
<rect x="471.18" y="915.27" width="6.53" height="77.43" fill="#00a69b"/>
<rect x="471.18" y="895.91" width="6.53" height="19.36" fill="#57c17b"/>
<rect x="471.18" y="876.56" width="6.53" height="19.36" fill="#6f87d8"/>
<rect x="471.18" y="857.20" width="6.53" height="19.36" fill="#663db8"/>
<rect x="497.32" y="915.27" width="6.53" height="77.43" fill="#57c17b"/>
<rect x="497.32" y="876.56" width="6.53" height="38.71" fill="#bc52bc"/>
<rect x="497.32" y="837.84" width="6.53" height="38.71" fill="#9e3533"/>
<rect x="523.45" y="973.34" width="6.53" height="19.36" fill="#9e3533"/>
<rect x="543.06" y="973.34" width="6.53" height="19.36" fill="#00a69b"/>
<rect x="543.06" y="953.99" width="6.53" height="19.36" fill="#daa05d"/>
<rect x="549.59" y="915.27" width="6.53" height="77.43" fill="#9e3533"/>
<rect x="549.59" y="857.20" width="6.53" height="58.07" fill="#daa05d"/>
<rect x="562.66" y="934.63" width="6.53" height="58.07" fill="#00a69b"/>
<rect x="601.87" y="973.34" width="6.53" height="19.36" fill="#00a69b"/>
<rect x="601.87" y="876.56" width="6.53" height="96.79" fill="#bc52bc"/>
<rect x="693.35" y="779.77" width="6.53" height="212.93" fill="#00a69b"/>
<rect x="693.35" y="760.41" width="6.53" height="19.36" fill="#9e3533"/>
<rect x="693.35" y="721.70" width="6.53" height="38.71" fill="#bfaf40"/>
<rect x="745.63" y="953.99" width="6.53" height="38.71" fill="#00a69b"/>
<rect x="778.30" y="973.34" width="6.53" height="19.36" fill="#00a69b"/>
<rect x="804.44" y="876.56" width="6.53" height="116.14" fill="#00a69b"/>
<rect x="817.51" y="934.63" width="6.53" height="58.07" fill="#00a69b"/>
<text x="402.55" y="1048.30" font-size="15.8" fill="#343741" font-weight="700" >@timestamp per 30 days</text>
<g transform="translate(45.20 857.2) rotate(-90)"><text transform="translate(-22.84 0.00) scale(0.9914 1)" font-size="15.8" fill="#343741" font-weight="700" >Count</text></g>
<circle cx="955.90" cy="732.00" r="5" fill="#bfaf40"/>
<text transform="translate(971.25 736.00) scale(1.1176 1)" font-size="15.2" fill="#343741" >304</text>
<rect x="1090.25" y="724.75" width="2.9" height="2.9" fill="none" stroke="#2b2e38" stroke-width="1.2"/><rect x="1090.25" y="730.25" width="2.9" height="2.9" fill="none" stroke="#2b2e38" stroke-width="1.2"/><rect x="1090.25" y="735.75" width="2.9" height="2.9" fill="none" stroke="#2b2e38" stroke-width="1.2"/>
<circle cx="955.90" cy="759.00" r="5" fill="#daa05d"/>
<text transform="translate(971.51 763.00) scale(1.1207 1)" font-size="15.2" fill="#343741" >401</text>
<rect x="1090.25" y="751.75" width="2.9" height="2.9" fill="none" stroke="#2b2e38" stroke-width="1.2"/><rect x="1090.25" y="757.25" width="2.9" height="2.9" fill="none" stroke="#2b2e38" stroke-width="1.2"/><rect x="1090.25" y="762.75" width="2.9" height="2.9" fill="none" stroke="#2b2e38" stroke-width="1.2"/>
<circle cx="955.90" cy="787.00" r="5" fill="#9e3533"/>
<text transform="translate(971.51 791.00) scale(1.1072 1)" font-size="15.2" fill="#343741" >404</text>
<rect x="1090.25" y="779.75" width="2.9" height="2.9" fill="none" stroke="#2b2e38" stroke-width="1.2"/><rect x="1090.25" y="785.25" width="2.9" height="2.9" fill="none" stroke="#2b2e38" stroke-width="1.2"/><rect x="1090.25" y="790.75" width="2.9" height="2.9" fill="none" stroke="#2b2e38" stroke-width="1.2"/>
<circle cx="955.90" cy="814.00" r="5" fill="#bc52bc"/>
<text transform="translate(971.51 818.00) scale(1.1173 1)" font-size="15.2" fill="#343741" >403</text>
<rect x="1090.25" y="806.75" width="2.9" height="2.9" fill="none" stroke="#2b2e38" stroke-width="1.2"/><rect x="1090.25" y="812.25" width="2.9" height="2.9" fill="none" stroke="#2b2e38" stroke-width="1.2"/><rect x="1090.25" y="817.75" width="2.9" height="2.9" fill="none" stroke="#2b2e38" stroke-width="1.2"/>
<circle cx="955.90" cy="842.00" r="5" fill="#663db8"/>
<text transform="translate(971.21 846.00) scale(1.1279 1)" font-size="15.2" fill="#343741" >505</text>
<rect x="1090.25" y="834.75" width="2.9" height="2.9" fill="none" stroke="#2b2e38" stroke-width="1.2"/><rect x="1090.25" y="840.25" width="2.9" height="2.9" fill="none" stroke="#2b2e38" stroke-width="1.2"/><rect x="1090.25" y="845.75" width="2.9" height="2.9" fill="none" stroke="#2b2e38" stroke-width="1.2"/>
<circle cx="955.90" cy="869.00" r="5" fill="#6f87d8"/>
<text transform="translate(971.21 873.00) scale(1.1293 1)" font-size="15.2" fill="#343741" >503</text>
<rect x="1090.25" y="861.75" width="2.9" height="2.9" fill="none" stroke="#2b2e38" stroke-width="1.2"/><rect x="1090.25" y="867.25" width="2.9" height="2.9" fill="none" stroke="#2b2e38" stroke-width="1.2"/><rect x="1090.25" y="872.75" width="2.9" height="2.9" fill="none" stroke="#2b2e38" stroke-width="1.2"/>
<circle cx="955.90" cy="897.00" r="5" fill="#57c17b"/>
<text transform="translate(971.51 901.00) scale(1.1139 1)" font-size="15.2" fill="#343741" >400</text>
<rect x="1090.25" y="889.75" width="2.9" height="2.9" fill="none" stroke="#2b2e38" stroke-width="1.2"/><rect x="1090.25" y="895.25" width="2.9" height="2.9" fill="none" stroke="#2b2e38" stroke-width="1.2"/><rect x="1090.25" y="900.75" width="2.9" height="2.9" fill="none" stroke="#2b2e38" stroke-width="1.2"/>
<circle cx="955.90" cy="924.00" r="5" fill="#00a69b"/>
<text transform="translate(971.03 928.00) scale(1.1332 1)" font-size="15.2" fill="#343741" >200</text>
<rect x="1090.25" y="916.75" width="2.9" height="2.9" fill="none" stroke="#2b2e38" stroke-width="1.2"/><rect x="1090.25" y="922.25" width="2.9" height="2.9" fill="none" stroke="#2b2e38" stroke-width="1.2"/><rect x="1090.25" y="927.75" width="2.9" height="2.9" fill="none" stroke="#2b2e38" stroke-width="1.2"/>
</svg>
<!-- chart2 -->
<svg class="a" style="left:1124px;top:690px" width="786" height="380" viewBox="1124 690 786 380" text-rendering="geometricPrecision">
<path d="M1211.40 721.20V992.70H1691.20" stroke="#edf0f5" stroke-width="1.2" fill="none"/>
<text transform="translate(1191.47 997.25) scale(1.0150 1)" font-size="13.4" fill="#69707d" >0</text>
<text transform="translate(1191.60 977.89) scale(1.0150 1)" font-size="13.4" fill="#69707d" >1</text>
<text transform="translate(1191.62 958.54) scale(1.0150 1)" font-size="13.4" fill="#69707d" >2</text>
<text transform="translate(1191.53 939.18) scale(1.0150 1)" font-size="13.4" fill="#69707d" >3</text>
<text transform="translate(1191.33 919.82) scale(1.0150 1)" font-size="13.4" fill="#69707d" >4</text>
<text transform="translate(1191.51 900.46) scale(1.0150 1)" font-size="13.4" fill="#69707d" >5</text>
<text transform="translate(1191.53 881.11) scale(1.0150 1)" font-size="13.4" fill="#69707d" >6</text>
<text transform="translate(1191.62 861.75) scale(1.0150 1)" font-size="13.4" fill="#69707d" >7</text>
<text transform="translate(1191.53 842.39) scale(1.0150 1)" font-size="13.4" fill="#69707d" >8</text>
<text transform="translate(1191.58 823.04) scale(1.0150 1)" font-size="13.4" fill="#69707d" >9</text>
<text transform="translate(1184.18 803.68) scale(0.9954 1)" font-size="13.4" fill="#69707d" >10</text>
<text transform="translate(1184.09 784.32) scale(1.0870 1)" font-size="13.4" fill="#69707d" >11</text>
<text transform="translate(1184.17 764.96) scale(1.0068 1)" font-size="13.4" fill="#69707d" >12</text>
<text x="1184.18" y="745.61" font-size="13.4" fill="#69707d" >13</text>
<text transform="translate(1184.19 726.25) scale(0.9858 1)" font-size="13.4" fill="#69707d" >14</text>
<text transform="translate(1248.53 1008.20) scale(0.9880 1)" font-size="13.4" fill="#69707d" >2014</text>
<text transform="translate(1296.50 1008.20) scale(0.9939 1)" font-size="13.4" fill="#69707d" >2015</text>
<text transform="translate(1344.47 1008.20) scale(0.9948 1)" font-size="13.4" fill="#69707d" >2016</text>
<text transform="translate(1392.44 1008.20) scale(0.9978 1)" font-size="13.4" fill="#69707d" >2017</text>
<text transform="translate(1440.41 1008.20) scale(0.9946 1)" font-size="13.4" fill="#69707d" >2018</text>
<text transform="translate(1488.38 1008.20) scale(0.9964 1)" font-size="13.4" fill="#69707d" >2019</text>
<text transform="translate(1536.35 1008.20) scale(0.9925 1)" font-size="13.4" fill="#69707d" >2020</text>
<text transform="translate(1584.32 1008.20) scale(0.9971 1)" font-size="13.4" fill="#69707d" >2021</text>
<text transform="translate(1632.29 1008.20) scale(0.9978 1)" font-size="13.4" fill="#69707d" >2022</text>
<path d="M1245.60 992.70v14.8 M1293.57 992.70v14.8 M1341.54 992.70v14.8 M1389.51 992.70v14.8 M1437.48 992.70v14.8 M1485.45 992.70v14.8 M1533.42 992.70v14.8 M1581.39 992.70v14.8 M1629.36 992.70v14.8 M1677.33 992.70v14.8" stroke="#dfe3ea" stroke-width="1.2" fill="none"/>
<rect x="1436.55" y="915.27" width="3.94" height="77.43" fill="#00a69b"/>
<rect x="1436.55" y="895.91" width="3.94" height="19.36" fill="#57c17b"/>
<rect x="1436.55" y="876.56" width="3.94" height="19.36" fill="#6f87d8"/>
<rect x="1436.55" y="857.20" width="3.94" height="19.36" fill="#663db8"/>
<rect x="1452.30" y="915.27" width="3.94" height="77.43" fill="#57c17b"/>
<rect x="1452.30" y="876.56" width="3.94" height="38.71" fill="#bc52bc"/>
<rect x="1452.30" y="837.84" width="3.94" height="38.71" fill="#9e3533"/>
<rect x="1468.06" y="973.34" width="3.94" height="19.36" fill="#9e3533"/>
<rect x="1479.87" y="973.34" width="3.94" height="19.36" fill="#00a69b"/>
<rect x="1479.87" y="953.99" width="3.94" height="19.36" fill="#daa05d"/>
<rect x="1483.81" y="915.27" width="3.94" height="77.43" fill="#9e3533"/>
<rect x="1483.81" y="857.20" width="3.94" height="58.07" fill="#daa05d"/>
<rect x="1491.69" y="934.63" width="3.94" height="58.07" fill="#00a69b"/>
<rect x="1515.32" y="973.34" width="3.94" height="19.36" fill="#00a69b"/>
<rect x="1515.32" y="876.56" width="3.94" height="96.79" fill="#bc52bc"/>
<rect x="1570.45" y="779.77" width="3.94" height="212.93" fill="#00a69b"/>
<rect x="1570.45" y="760.41" width="3.94" height="19.36" fill="#9e3533"/>
<rect x="1570.45" y="721.70" width="3.94" height="38.71" fill="#bfaf40"/>
<rect x="1601.96" y="953.99" width="3.94" height="38.71" fill="#00a69b"/>
<rect x="1621.65" y="973.34" width="3.94" height="19.36" fill="#00a69b"/>
<rect x="1637.40" y="876.56" width="3.94" height="116.14" fill="#00a69b"/>
<rect x="1645.28" y="934.63" width="3.94" height="58.07" fill="#00a69b"/>
<text x="1358.20" y="1048.30" font-size="15.8" fill="#343741" font-weight="700" >@timestamp per 30 days</text>
<g transform="translate(1158.60 857.2) rotate(-90)"><text transform="translate(-22.84 0.00) scale(0.9914 1)" font-size="15.8" fill="#343741" font-weight="700" >Count</text></g>
<circle cx="1752.60" cy="732.00" r="5" fill="#bfaf40"/>
<text transform="translate(1767.25 736.00) scale(1.1176 1)" font-size="15.2" fill="#343741" >304</text>
<rect x="1886.45" y="724.75" width="2.9" height="2.9" fill="none" stroke="#2b2e38" stroke-width="1.2"/><rect x="1886.45" y="730.25" width="2.9" height="2.9" fill="none" stroke="#2b2e38" stroke-width="1.2"/><rect x="1886.45" y="735.75" width="2.9" height="2.9" fill="none" stroke="#2b2e38" stroke-width="1.2"/>
<circle cx="1752.60" cy="759.00" r="5" fill="#daa05d"/>
<text transform="translate(1767.51 763.00) scale(1.1207 1)" font-size="15.2" fill="#343741" >401</text>
<rect x="1886.45" y="751.75" width="2.9" height="2.9" fill="none" stroke="#2b2e38" stroke-width="1.2"/><rect x="1886.45" y="757.25" width="2.9" height="2.9" fill="none" stroke="#2b2e38" stroke-width="1.2"/><rect x="1886.45" y="762.75" width="2.9" height="2.9" fill="none" stroke="#2b2e38" stroke-width="1.2"/>
<circle cx="1752.60" cy="787.00" r="5" fill="#9e3533"/>
<text transform="translate(1767.51 791.00) scale(1.1072 1)" font-size="15.2" fill="#343741" >404</text>
<rect x="1886.45" y="779.75" width="2.9" height="2.9" fill="none" stroke="#2b2e38" stroke-width="1.2"/><rect x="1886.45" y="785.25" width="2.9" height="2.9" fill="none" stroke="#2b2e38" stroke-width="1.2"/><rect x="1886.45" y="790.75" width="2.9" height="2.9" fill="none" stroke="#2b2e38" stroke-width="1.2"/>
<circle cx="1752.60" cy="814.00" r="5" fill="#bc52bc"/>
<text transform="translate(1767.51 818.00) scale(1.1173 1)" font-size="15.2" fill="#343741" >403</text>
<rect x="1886.45" y="806.75" width="2.9" height="2.9" fill="none" stroke="#2b2e38" stroke-width="1.2"/><rect x="1886.45" y="812.25" width="2.9" height="2.9" fill="none" stroke="#2b2e38" stroke-width="1.2"/><rect x="1886.45" y="817.75" width="2.9" height="2.9" fill="none" stroke="#2b2e38" stroke-width="1.2"/>
<circle cx="1752.60" cy="842.00" r="5" fill="#663db8"/>
<text transform="translate(1767.21 846.00) scale(1.1279 1)" font-size="15.2" fill="#343741" >505</text>
<rect x="1886.45" y="834.75" width="2.9" height="2.9" fill="none" stroke="#2b2e38" stroke-width="1.2"/><rect x="1886.45" y="840.25" width="2.9" height="2.9" fill="none" stroke="#2b2e38" stroke-width="1.2"/><rect x="1886.45" y="845.75" width="2.9" height="2.9" fill="none" stroke="#2b2e38" stroke-width="1.2"/>
<circle cx="1752.60" cy="869.00" r="5" fill="#6f87d8"/>
<text transform="translate(1767.21 873.00) scale(1.1293 1)" font-size="15.2" fill="#343741" >503</text>
<rect x="1886.45" y="861.75" width="2.9" height="2.9" fill="none" stroke="#2b2e38" stroke-width="1.2"/><rect x="1886.45" y="867.25" width="2.9" height="2.9" fill="none" stroke="#2b2e38" stroke-width="1.2"/><rect x="1886.45" y="872.75" width="2.9" height="2.9" fill="none" stroke="#2b2e38" stroke-width="1.2"/>
<circle cx="1752.60" cy="897.00" r="5" fill="#57c17b"/>
<text transform="translate(1767.51 901.00) scale(1.1139 1)" font-size="15.2" fill="#343741" >400</text>
<rect x="1886.45" y="889.75" width="2.9" height="2.9" fill="none" stroke="#2b2e38" stroke-width="1.2"/><rect x="1886.45" y="895.25" width="2.9" height="2.9" fill="none" stroke="#2b2e38" stroke-width="1.2"/><rect x="1886.45" y="900.75" width="2.9" height="2.9" fill="none" stroke="#2b2e38" stroke-width="1.2"/>
<circle cx="1752.60" cy="924.00" r="5" fill="#00a69b"/>
<text transform="translate(1767.03 928.00) scale(1.1332 1)" font-size="15.2" fill="#343741" >200</text>
<rect x="1886.45" y="916.75" width="2.9" height="2.9" fill="none" stroke="#2b2e38" stroke-width="1.2"/><rect x="1886.45" y="922.25" width="2.9" height="2.9" fill="none" stroke="#2b2e38" stroke-width="1.2"/><rect x="1886.45" y="927.75" width="2.9" height="2.9" fill="none" stroke="#2b2e38" stroke-width="1.2"/>
</svg>
<!-- bars -->
<svg class="a" style="left:10px;top:1110px" width="1900" height="485" viewBox="10 1110 1900 485" text-rendering="geometricPrecision">
<path d="M442.80 1141.70V1512.70 M570.42 1141.70V1512.70 M698.04 1141.70V1512.70 M825.66 1141.70V1512.70 M953.28 1141.70V1512.70 M1080.90 1141.70V1512.70 M1208.52 1141.70V1512.70 M1336.14 1141.70V1512.70 M1463.76 1141.70V1512.70 M1591.38 1141.70V1512.70 M1719.00 1141.70V1512.70" stroke="#eceef3" stroke-width="1.2" fill="none"/>
<path d="M442.80 1178.80H1719.00 M442.80 1253.00H1719.00 M442.80 1327.20H1719.00 M442.80 1401.40H1719.00 M442.80 1475.60H1719.00" stroke="#eceef3" stroke-width="1.2" stroke-dasharray="6 4.2" fill="none"/>
<path d="M442.80 1512.70H1719.60" stroke="#eaedf3" stroke-width="1.3" fill="none"/>
<rect x="442.80" y="1151.05" width="765.72" height="55.50" fill="#54b399"/>
<rect x="1208.52" y="1151.05" width="255.24" height="55.50" fill="#6092c0"/>
<rect x="1463.76" y="1151.05" width="127.62" height="55.50" fill="#d36086"/>
<rect x="1591.38" y="1151.05" width="127.62" height="55.50" fill="#9170b8"/>
<text transform="translate(426.52 1182.60) scale(1.0150 1)" font-size="13.4" fill="#69707d" >/</text>
<rect x="442.80" y="1225.25" width="765.72" height="55.50" fill="#54b399"/>
<rect x="1208.52" y="1225.25" width="127.62" height="55.50" fill="#d36086"/>
<text transform="translate(70.70 1256.80) scale(0.9933 1)" font-size="13.4" fill="#69707d" >/pbserver/..Áœ..Áœ..Áœ..Áœ..Áœ../winnt/system32/cmd.exe</text>
<rect x="442.80" y="1299.45" width="127.62" height="55.50" fill="#54b399"/>
<rect x="570.42" y="1299.45" width="255.24" height="55.50" fill="#ca8eae"/>
<text transform="translate(354.00 1331.00) scale(1.0061 1)" font-size="13.4" fill="#69707d" >/default.aspx</text>
<rect x="442.80" y="1373.65" width="382.86" height="55.50" fill="#54b399"/>
<text transform="translate(321.10 1405.20) scale(1.0263 1)" font-size="13.4" fill="#69707d" >/health-monitoring</text>
<rect x="442.80" y="1447.85" width="382.86" height="55.50" fill="#ca8eae"/>
<text transform="translate(323.90 1479.40) scale(1.0143 1)" font-size="13.4" fill="#69707d" >/help/default.aspx</text>
<text transform="translate(439.02 1536.00) scale(1.0150 1)" font-size="13.4" fill="#69707d" >0</text>
<text transform="translate(566.45 1536.00) scale(1.0150 1)" font-size="13.4" fill="#69707d" >1</text>
<text transform="translate(694.26 1536.00) scale(1.0150 1)" font-size="13.4" fill="#69707d" >2</text>
<text transform="translate(821.92 1536.00) scale(1.0150 1)" font-size="13.4" fill="#69707d" >3</text>
<text transform="translate(949.54 1536.00) scale(1.0150 1)" font-size="13.4" fill="#69707d" >4</text>
<text transform="translate(1077.13 1536.00) scale(1.0150 1)" font-size="13.4" fill="#69707d" >5</text>
<text transform="translate(1204.69 1536.00) scale(1.0150 1)" font-size="13.4" fill="#69707d" >6</text>
<text transform="translate(1332.35 1536.00) scale(1.0150 1)" font-size="13.4" fill="#69707d" >7</text>
<text transform="translate(1459.98 1536.00) scale(1.0150 1)" font-size="13.4" fill="#69707d" >8</text>
<text transform="translate(1587.60 1536.00) scale(1.0150 1)" font-size="13.4" fill="#69707d" >9</text>
<text transform="translate(1711.18 1536.00) scale(1.0150 1)" font-size="13.4" fill="#69707d" >10</text>
<text transform="translate(1057.96 1572.40) scale(0.9914 1)" font-size="15.8" fill="#343741" font-weight="700" >Count</text>
<g transform="translate(45.1 1327) rotate(-90)"><text transform="translate(-19.70 0.00) scale(0.9480 1)" font-size="15.8" fill="#343741" font-weight="700" >URLs</text></g>
<circle cx="1752.90" cy="1152.00" r="5" fill="#ca8eae"/>
<text transform="translate(1767.81 1156.00) scale(1.1173 1)" font-size="15.2" fill="#343741" >403</text>
<rect x="1886.25" y="1144.75" width="2.9" height="2.9" fill="none" stroke="#2b2e38" stroke-width="1.2"/><rect x="1886.25" y="1150.25" width="2.9" height="2.9" fill="none" stroke="#2b2e38" stroke-width="1.2"/><rect x="1886.25" y="1155.75" width="2.9" height="2.9" fill="none" stroke="#2b2e38" stroke-width="1.2"/>
<circle cx="1752.90" cy="1179.00" r="5" fill="#9170b8"/>
<text transform="translate(1767.51 1183.00) scale(1.1279 1)" font-size="15.2" fill="#343741" >505</text>
<rect x="1886.25" y="1171.75" width="2.9" height="2.9" fill="none" stroke="#2b2e38" stroke-width="1.2"/><rect x="1886.25" y="1177.25" width="2.9" height="2.9" fill="none" stroke="#2b2e38" stroke-width="1.2"/><rect x="1886.25" y="1182.75" width="2.9" height="2.9" fill="none" stroke="#2b2e38" stroke-width="1.2"/>
<circle cx="1752.90" cy="1207.00" r="5" fill="#d36086"/>
<text transform="translate(1767.81 1211.00) scale(1.1072 1)" font-size="15.2" fill="#343741" >404</text>
<rect x="1886.25" y="1199.75" width="2.9" height="2.9" fill="none" stroke="#2b2e38" stroke-width="1.2"/><rect x="1886.25" y="1205.25" width="2.9" height="2.9" fill="none" stroke="#2b2e38" stroke-width="1.2"/><rect x="1886.25" y="1210.75" width="2.9" height="2.9" fill="none" stroke="#2b2e38" stroke-width="1.2"/>
<circle cx="1752.90" cy="1234.00" r="5" fill="#6092c0"/>
<text transform="translate(1767.81 1238.00) scale(1.1207 1)" font-size="15.2" fill="#343741" >401</text>
<rect x="1886.25" y="1226.75" width="2.9" height="2.9" fill="none" stroke="#2b2e38" stroke-width="1.2"/><rect x="1886.25" y="1232.25" width="2.9" height="2.9" fill="none" stroke="#2b2e38" stroke-width="1.2"/><rect x="1886.25" y="1237.75" width="2.9" height="2.9" fill="none" stroke="#2b2e38" stroke-width="1.2"/>
<circle cx="1752.90" cy="1262.00" r="5" fill="#54b399"/>
<text transform="translate(1767.33 1266.00) scale(1.1332 1)" font-size="15.2" fill="#343741" >200</text>
<rect x="1886.25" y="1254.75" width="2.9" height="2.9" fill="none" stroke="#2b2e38" stroke-width="1.2"/><rect x="1886.25" y="1260.25" width="2.9" height="2.9" fill="none" stroke="#2b2e38" stroke-width="1.2"/><rect x="1886.25" y="1265.75" width="2.9" height="2.9" fill="none" stroke="#2b2e38" stroke-width="1.2"/>
</svg>
<!-- pies -->
<svg class="a" style="left:10px;top:1636px" width="945" height="380" viewBox="10 1636 945 380">
<g stroke="#fff" stroke-width="1.3" stroke-linejoin="round">
<path d="M401.90 1711.50A116.4 116.4 0 0 1 510.25 1870.43L453.10 1847.99A55.0 55.0 0 0 0 401.90 1772.90Z" fill="#57c17b"/>
<path d="M510.25 1870.43A116.4 116.4 0 0 1 481.07 1913.23L439.31 1868.22A55.0 55.0 0 0 0 453.10 1847.99Z" fill="#6f87d8"/>
<path d="M481.07 1913.23A116.4 116.4 0 0 1 452.40 1932.77L425.76 1877.45A55.0 55.0 0 0 0 439.31 1868.22Z" fill="#663db8"/>
<path d="M452.40 1932.77A116.4 116.4 0 0 1 419.25 1943.00L410.10 1882.29A55.0 55.0 0 0 0 425.76 1877.45Z" fill="#bc52bc"/>
<path d="M419.25 1943.00A116.4 116.4 0 1 1 401.90 1711.50L401.90 1772.90A55.0 55.0 0 1 0 410.10 1882.29Z" fill="#00a69b"/>
<path d="M401.90 1649.30A178.6 178.6 0 0 1 568.15 1762.65L510.25 1785.37A116.4 116.4 0 0 0 401.90 1711.50Z" fill="#a2dcb6"/>
<path d="M568.15 1762.65A178.6 178.6 0 0 1 576.02 1867.64L515.38 1853.80A116.4 116.4 0 0 0 510.25 1785.37Z" fill="#a2dcb6"/>
<path d="M576.02 1867.64A178.6 178.6 0 0 1 568.15 1893.15L510.25 1870.43A116.4 116.4 0 0 0 515.38 1853.80Z" fill="#a2dcb6"/>
<path d="M568.15 1893.15A178.6 178.6 0 0 1 541.54 1939.26L492.91 1900.47A116.4 116.4 0 0 0 510.25 1870.43Z" fill="#bfcaee"/>
<path d="M541.54 1939.26A178.6 178.6 0 0 1 523.38 1958.82L481.07 1913.23A116.4 116.4 0 0 0 492.91 1900.47Z" fill="#bfcaee"/>
<path d="M523.38 1958.82A178.6 178.6 0 0 1 479.39 1988.81L452.40 1932.77A116.4 116.4 0 0 0 481.07 1913.23Z" fill="#a085d6"/>
<path d="M479.39 1988.81A178.6 178.6 0 0 1 428.52 2004.51L419.25 1943.00A116.4 116.4 0 0 0 452.40 1932.77Z" fill="#d89cd8"/>
<path d="M428.52 2004.51A178.6 178.6 0 0 1 280.42 1696.98L322.73 1742.57A116.4 116.4 0 0 0 419.25 1943.00Z" fill="#0dffef"/>
<path d="M280.42 1696.98A178.6 178.6 0 0 1 349.26 1657.23L367.59 1716.67A116.4 116.4 0 0 0 322.73 1742.57Z" fill="#0dffef"/>
<path d="M349.26 1657.23A178.6 178.6 0 0 1 401.90 1649.30L401.90 1711.50A116.4 116.4 0 0 0 367.59 1716.67Z" fill="#0dffef"/>
</g>
<circle cx="797.90" cy="1664.00" r="5" fill="#00a69b"/>
<text transform="translate(812.03 1668.00) scale(0.9020 1)" font-size="15.2" fill="#343741" >IE</text>
<rect x="931.35" y="1656.75" width="2.9" height="2.9" fill="none" stroke="#2b2e38" stroke-width="1.2"/><rect x="931.35" y="1662.25" width="2.9" height="2.9" fill="none" stroke="#2b2e38" stroke-width="1.2"/><rect x="931.35" y="1667.75" width="2.9" height="2.9" fill="none" stroke="#2b2e38" stroke-width="1.2"/>
<circle cx="797.90" cy="1692.00" r="5" fill="#57c17b"/>
<text transform="translate(812.50 1696.00) scale(1.0377 1)" font-size="15.2" fill="#343741" >Chrome</text>
<rect x="931.35" y="1684.75" width="2.9" height="2.9" fill="none" stroke="#2b2e38" stroke-width="1.2"/><rect x="931.35" y="1690.25" width="2.9" height="2.9" fill="none" stroke="#2b2e38" stroke-width="1.2"/><rect x="931.35" y="1695.75" width="2.9" height="2.9" fill="none" stroke="#2b2e38" stroke-width="1.2"/>
<circle cx="797.90" cy="1719.00" r="5" fill="#6f87d8"/>
<text transform="translate(812.02 1723.00) scale(1.0279 1)" font-size="15.2" fill="#343741" >Firefox</text>
<rect x="931.35" y="1711.75" width="2.9" height="2.9" fill="none" stroke="#2b2e38" stroke-width="1.2"/><rect x="931.35" y="1717.25" width="2.9" height="2.9" fill="none" stroke="#2b2e38" stroke-width="1.2"/><rect x="931.35" y="1722.75" width="2.9" height="2.9" fill="none" stroke="#2b2e38" stroke-width="1.2"/>
<circle cx="797.90" cy="1747.00" r="5" fill="#663db8"/>
<text transform="translate(812.02 1751.00) scale(1.0275 1)" font-size="15.2" fill="#343741" >Edge</text>
<rect x="931.35" y="1739.75" width="2.9" height="2.9" fill="none" stroke="#2b2e38" stroke-width="1.2"/><rect x="931.35" y="1745.25" width="2.9" height="2.9" fill="none" stroke="#2b2e38" stroke-width="1.2"/><rect x="931.35" y="1750.75" width="2.9" height="2.9" fill="none" stroke="#2b2e38" stroke-width="1.2"/>
<circle cx="797.90" cy="1774.00" r="5" fill="#bc52bc"/>
<text transform="translate(811.99 1778.00) scale(1.0516 1)" font-size="15.2" fill="#343741" >Mobile Safari</text>
<rect x="931.35" y="1766.75" width="2.9" height="2.9" fill="none" stroke="#2b2e38" stroke-width="1.2"/><rect x="931.35" y="1772.25" width="2.9" height="2.9" fill="none" stroke="#2b2e38" stroke-width="1.2"/><rect x="931.35" y="1777.75" width="2.9" height="2.9" fill="none" stroke="#2b2e38" stroke-width="1.2"/>
</svg>
<svg class="a" style="left:965px;top:1636px" width="945" height="380" viewBox="965 1636 945 380">
<g stroke="#fff" stroke-width="1.3" stroke-linejoin="round">
<path d="M1356.90 1711.50A116.4 116.4 0 0 1 1391.21 1716.67L1373.11 1775.34A55.0 55.0 0 0 0 1356.90 1772.90Z" fill="#57c17b"/>
<path d="M1391.21 1716.67A116.4 116.4 0 0 1 1422.47 1731.73L1387.88 1782.46A55.0 55.0 0 0 0 1373.11 1775.34Z" fill="#6f87d8"/>
<path d="M1422.47 1731.73A116.4 116.4 0 1 1 1356.90 1711.50L1356.90 1772.90A55.0 55.0 0 1 0 1387.88 1782.46Z" fill="#00a69b"/>
<path d="M1356.90 1649.30A178.6 178.6 0 0 1 1409.54 1657.23L1391.21 1716.67A116.4 116.4 0 0 0 1356.90 1711.50Z" fill="#a2dcb6"/>
<path d="M1409.54 1657.23A178.6 178.6 0 0 1 1457.51 1680.33L1422.47 1731.73A116.4 116.4 0 0 0 1391.21 1716.67Z" fill="#bfcaee"/>
<path d="M1457.51 1680.33A178.6 178.6 0 0 1 1343.20 2005.97L1347.97 1943.96A116.4 116.4 0 0 0 1422.47 1731.73Z" fill="#0dffef"/>
<path d="M1343.20 2005.97A178.6 178.6 0 0 1 1214.64 1719.92L1264.18 1757.52A116.4 116.4 0 0 0 1347.97 1943.96Z" fill="#0dffef"/>
<path d="M1214.64 1719.92A178.6 178.6 0 0 1 1330.28 1651.29L1339.55 1712.80A116.4 116.4 0 0 0 1264.18 1757.52Z" fill="#0dffef"/>
<path d="M1330.28 1651.29A178.6 178.6 0 0 1 1356.90 1649.30L1356.90 1711.50A116.4 116.4 0 0 0 1339.55 1712.80Z" fill="#0dffef"/>
</g>
<circle cx="1752.70" cy="1664.00" r="5" fill="#00a69b"/>
<text transform="translate(1768.03 1668.00) scale(1.0418 1)" font-size="15.2" fill="#343741" >Windows</text>
<rect x="1886.35" y="1656.75" width="2.9" height="2.9" fill="none" stroke="#2b2e38" stroke-width="1.2"/><rect x="1886.35" y="1662.25" width="2.9" height="2.9" fill="none" stroke="#2b2e38" stroke-width="1.2"/><rect x="1886.35" y="1667.75" width="2.9" height="2.9" fill="none" stroke="#2b2e38" stroke-width="1.2"/>
<circle cx="1752.70" cy="1692.00" r="5" fill="#57c17b"/>
<text transform="translate(1766.85 1696.00) scale(1.0045 1)" font-size="15.2" fill="#343741" >Mac OS X</text>
<rect x="1886.35" y="1684.75" width="2.9" height="2.9" fill="none" stroke="#2b2e38" stroke-width="1.2"/><rect x="1886.35" y="1690.25" width="2.9" height="2.9" fill="none" stroke="#2b2e38" stroke-width="1.2"/><rect x="1886.35" y="1695.75" width="2.9" height="2.9" fill="none" stroke="#2b2e38" stroke-width="1.2"/>
<circle cx="1752.70" cy="1719.00" r="5" fill="#6f87d8"/>
<text x="1767.08" y="1723.00" font-size="15.2" fill="#343741" >iOS</text>
<rect x="1886.35" y="1711.75" width="2.9" height="2.9" fill="none" stroke="#2b2e38" stroke-width="1.2"/><rect x="1886.35" y="1717.25" width="2.9" height="2.9" fill="none" stroke="#2b2e38" stroke-width="1.2"/><rect x="1886.35" y="1722.75" width="2.9" height="2.9" fill="none" stroke="#2b2e38" stroke-width="1.2"/>
</svg>
</body></html>
